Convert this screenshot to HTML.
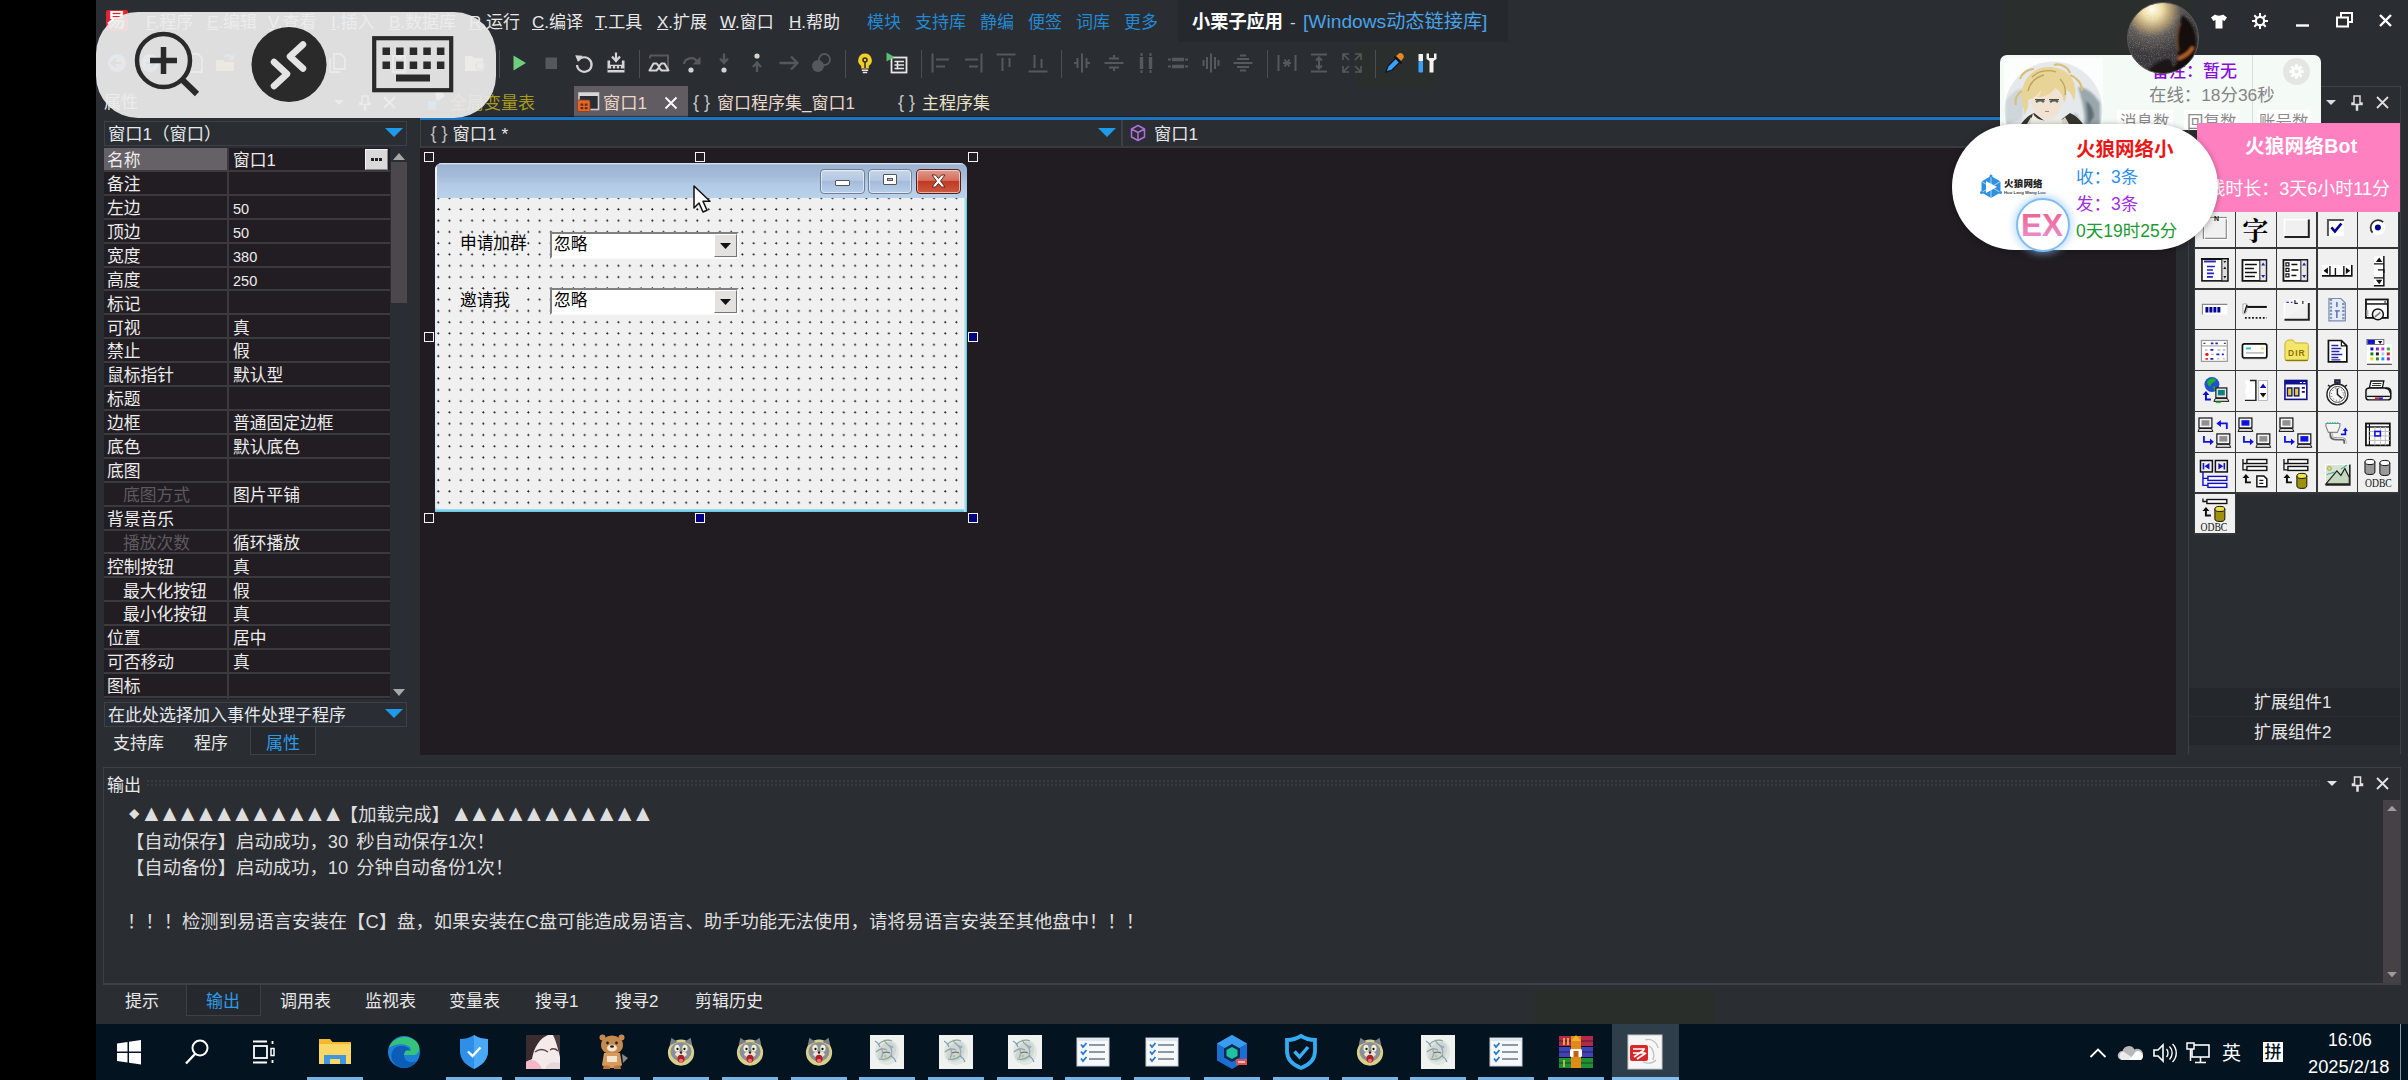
<!DOCTYPE html>
<html lang="zh-CN"><head><meta charset="utf-8"><title>小栗子应用</title>
<style>
*{box-sizing:border-box;margin:0;padding:0}
html,body{width:2408px;height:1080px;overflow:hidden;background:#2a2d32}
body{position:relative;font-family:"Liberation Sans","Noto Sans CJK SC",sans-serif;font-size:17px;color:#e6e6e6;line-height:1}
.a{position:absolute}
.t{position:absolute;white-space:nowrap;line-height:1}
svg{position:absolute;overflow:visible}
.song{font-family:"Liberation Sans","Noto Sans CJK SC",sans-serif}
.m{top:14px;font-size:17px;color:#e8e8e8}
.m.b{color:#2489d3}
.pg{font-size:16.750px;color:#ececec}
.pg.num{font-size:14.500px}
.frm{font-size:16.700px;color:#000}
.out{font-size:18.350px;color:#dedede}
.tri{font-size:23px;letter-spacing:-4.600px;line-height:0}

</style></head><body>
<!-- base surfaces -->
<div class="a" style="left:0;top:0;width:96px;height:1080px;background:#000"></div>
<div class="a" id="work" style="left:420px;top:147px;width:1756px;height:608px;background:#211c22"></div>
<div class="a" id="taskbar" style="left:96px;top:1024px;width:2312px;height:56px;background:#031320"></div>
<div class="a" style="left:1356px;top:44px;width:83px;height:46px;background:#2a2e2c"></div>
<!-- menu bar -->
<div class="a" style="left:1178px;top:0;width:330px;height:42px;background:#25282d"></div>
<div class="a" style="left:106px;top:10px;width:22px;height:21px;background:#e0262c;border-radius:2px"></div>
<div class="t" style="left:107px;top:11px;font-size:19px;font-weight:700;color:#fff">易</div>
<div class="t m" style="left:146px"><u>F</u>.程序</div>
<div class="t m" style="left:207px"><u>E</u>.编辑</div>
<div class="t m" style="left:268px"><u>V</u>.查看</div>
<div class="t m" style="left:331px"><u>I</u>.插入</div>
<div class="t m" style="left:389px"><u>B</u>.数据库</div>
<div class="t m" style="left:469px"><u>R</u>.运行</div>
<div class="t m" style="left:532px"><u>C</u>.编译</div>
<div class="t m" style="left:595px"><u>T</u>.工具</div>
<div class="t m" style="left:657px"><u>X</u>.扩展</div>
<div class="t m" style="left:720px"><u>W</u>.窗口</div>
<div class="t m" style="left:789px"><u>H</u>.帮助</div>
<div class="t m b" style="left:867px">模块</div>
<div class="t m b" style="left:915px">支持库</div>
<div class="t m b" style="left:980px">静编</div>
<div class="t m b" style="left:1028px">便签</div>
<div class="t m b" style="left:1076px">词库</div>
<div class="t m b" style="left:1124px">更多</div>
<div class="t m" style="left:1192px;color:#fff;font-weight:700;font-size:18.200px;top:13px">小栗子应用</div>
<div class="t m" style="left:1290px;color:#cfd6dc">-</div>
<div class="t m" style="left:1303px;color:#4aa3e6;font-size:19.200px;top:12px">[Windows动态链接库]</div>
<!-- toolbar -->
<svg style="left:105px;top:51px" width="24" height="24" viewBox="0 0 24 24"><circle cx="12" cy="12" r="9" fill="#7fb2e0"/><path d="M16 12H8M11 8l-4 4 4 4" stroke="#2a2d33" stroke-width="2" fill="none"/></svg>
<svg style="left:138px;top:51px" width="24" height="24" viewBox="0 0 24 24"><circle cx="12" cy="12" r="9" fill="#7fb2e0"/><path d="M8 12h8M13 8l4 4-4 4" stroke="#2a2d33" stroke-width="2" fill="none"/></svg>
<svg style="left:184px;top:51px" width="24" height="24" viewBox="0 0 24 24"><path d="M6 3h8l4 4v14H6z" fill="none" stroke="#d0d0d0" stroke-width="1.8"/></svg>
<svg style="left:214px;top:51px" width="24" height="24" viewBox="0 0 24 24"><path d="M2 20V9h7l2 2h9v9z" fill="#e8c56a"/><path d="M10 6c2-4 6-4 8-1l2-2v6h-6l2-2c-1-2-3-2-4 0z" fill="#5aa0e0"/></svg>
<svg style="left:326px;top:51px" width="24" height="24" viewBox="0 0 24 24"><path d="M8 3h7l4 4v11H8zM4 7v14h10" fill="none" stroke="#d0d0d0" stroke-width="1.8"/></svg>
<svg style="left:388px;top:51px" width="24" height="24" viewBox="0 0 24 24"><path d="M5 5h12v16H5zM9 2h4v5H9z" fill="none" stroke="#d0d0d0" stroke-width="1.8"/></svg>
<svg style="left:463px;top:51px" width="24" height="24" viewBox="0 0 24 24"><path d="M2 20V5h7l2 2h9v13z" fill="#e8d9a8"/><circle cx="17" cy="15" r="4" fill="none" stroke="#5aa0e0" stroke-width="2"/></svg>
<div class="a" style="left:499px;top:50px;width:1px;height:28px;background:#4b4e53"></div>
<svg style="left:507px;top:51px" width="24" height="24" viewBox="0 0 24 24"><path d="M6.5 4.5 19 12 6.5 19.5z" fill="#6fd07c"/></svg>
<svg style="left:539px;top:51px" width="24" height="24" viewBox="0 0 24 24"><rect x="6.5" y="6.5" width="11.5" height="11.5" fill="#55585c"/></svg>
<svg style="left:572px;top:51px" width="24" height="24" viewBox="0 0 24 24"><path d="M6.2 9.5A7.3 7.3 0 1 1 5 14" fill="none" stroke="#d4d4d4" stroke-width="2.2"/><path d="M3.2 4.2 10.6 4.8 6 11z" fill="#d4d4d4"/></svg>
<svg style="left:604px;top:51px" width="24" height="24" viewBox="0 0 24 24"><path d="M12 1.5v6.5M8 5.5l4 4.5 4-4.5" fill="none" stroke="#d4d4d4" stroke-width="2.2"/><path d="M3.5 9.5v12h17v-12h-2.6v4.2H6.1V9.5z" fill="#d4d4d4"/><path d="M8 15v2.5M12 15v2.5M16 15v2.5M3.5 18.3h17" stroke="#2a2d33" stroke-width="1.6"/></svg>
<div class="a" style="left:639px;top:50px;width:1px;height:28px;background:#4b4e53"></div>
<svg style="left:647px;top:51px" width="24" height="24" viewBox="0 0 24 24"><path d="M3 4.5h18v15M3 4.500v3" fill="none" stroke="#55585c" stroke-width="2"/><path d="M2.5 19.5l4-7h3.2l2.3 3.2 2.300-3.2h3.200l4 7h-7l-2.500-3-2.500 3z" fill="none" stroke="#d4d4d4" stroke-width="2" stroke-linejoin="round"/></svg>
<svg style="left:680px;top:51px" width="24" height="24" viewBox="0 0 24 24"><path d="M4 13c1-6 9-8 13-3" fill="none" stroke="#55585c" stroke-width="2.4"/><path d="M20.500 5.500v8h-8z" fill="#55585c"/><circle cx="11" cy="19" r="2.600" fill="#d4d4d4"/></svg>
<svg style="left:712px;top:51px" width="24" height="24" viewBox="0 0 24 24"><path d="M12 2.500v8M8 7.500l4 4.500 4-4.500" fill="none" stroke="#55585c" stroke-width="2.300"/><circle cx="12" cy="19" r="2.600" fill="#d4d4d4"/></svg>
<svg style="left:745px;top:51px" width="24" height="24" viewBox="0 0 24 24"><circle cx="12" cy="5" r="2.600" fill="#d4d4d4"/><path d="M12 21v-8M8 16l4-4.500 4 4.500" fill="none" stroke="#55585c" stroke-width="2.300"/></svg>
<svg style="left:777px;top:51px" width="24" height="24" viewBox="0 0 24 24"><path d="M2.500 12h18M14 5.500l6.500 6.500-6.500 6.500" fill="none" stroke="#55585c" stroke-width="2.300"/></svg>
<svg style="left:809px;top:51px" width="24" height="24" viewBox="0 0 24 24"><circle cx="15.500" cy="8.500" r="5.500" fill="none" stroke="#55585c" stroke-width="1.800"/><circle cx="9" cy="15" r="6" fill="#55585c"/></svg>
<div class="a" style="left:845px;top:50px;width:1px;height:28px;background:#4b4e53"></div>
<svg style="left:853px;top:51px" width="24" height="24" viewBox="0 0 24 24"><path d="M12 2.500a6.800 6.800 0 0 0-3.800 12.400v2.600h7.600v-2.600A6.800 6.800 0 0 0 12 2.500z" fill="#f3cf2a"/><circle cx="12" cy="9" r="2" fill="none" stroke="#2a2d33" stroke-width="1.500"/><path d="M12 11v6" stroke="#2a2d33" stroke-width="1.500"/><path d="M8.800 19.300h6.400M9.800 21.500h4.400" stroke="#e8e8e8" stroke-width="1.600"/></svg>
<svg style="left:885px;top:51px" width="24" height="24" viewBox="0 0 24 24"><rect x="6.500" y="6.500" width="15" height="15" fill="none" stroke="#e6e6e6" stroke-width="1.800"/><path d="M9.500 10.500h9.500M9.500 14h9.500M9.500 17.500h9.500M12.500 10v8.500" stroke="#e6e6e6" stroke-width="1.600"/><path d="M1.500 1.500 9.500 6 1.500 10.500z" fill="#58c070"/></svg>
<div class="a" style="left:921px;top:50px;width:1px;height:28px;background:#4b4e53"></div>
<svg style="left:929px;top:51px" width="24" height="24" viewBox="0 0 24 24"><path d="M3.500 2.500v19M7 8.500h13M7 15.500h9" stroke="#55585c" stroke-width="2" fill="none"/></svg>
<svg style="left:961px;top:51px" width="24" height="24" viewBox="0 0 24 24"><path d="M20.500 2.500v19M17 8.500H4M17 15.500H8" stroke="#55585c" stroke-width="2" fill="none"/></svg>
<svg style="left:994px;top:51px" width="24" height="24" viewBox="0 0 24 24"><path d="M2.500 3.500h19M8.500 7v13M15.500 7v9" stroke="#55585c" stroke-width="2" fill="none"/></svg>
<svg style="left:1026px;top:51px" width="24" height="24" viewBox="0 0 24 24"><path d="M2.500 20.500h19M8.500 17V4M15.500 17V8" stroke="#55585c" stroke-width="2" fill="none"/></svg>
<div class="a" style="left:1061px;top:50px;width:1px;height:28px;background:#4b4e53"></div>
<svg style="left:1070px;top:51px" width="24" height="24" viewBox="0 0 24 24"><path d="M12 2.500v19M7.500 7v10M16.500 7v10M4 12h3M17 12h3" stroke="#55585c" stroke-width="2" fill="none"/></svg>
<svg style="left:1102px;top:51px" width="24" height="24" viewBox="0 0 24 24"><path d="M2.500 12h19M7 7.500h10M7 16.500h10M12 4v3M12 17v3" stroke="#55585c" stroke-width="2" fill="none"/></svg>
<svg style="left:1134px;top:51px" width="24" height="24" viewBox="0 0 24 24"><path d="M7.500 6v12M16.500 6v12" stroke="#55585c" stroke-width="3.500"/><path d="M7.500 2v3M7.500 19v3M16.500 2v3M16.500 19v3" stroke="#55585c" stroke-width="2" fill="none"/></svg>
<svg style="left:1166px;top:51px" width="24" height="24" viewBox="0 0 24 24"><path d="M6 8.500h12M6 15.500h12" stroke="#55585c" stroke-width="3.500"/><path d="M2 8.500h3M19 8.500h3M2 15.500h3M19 15.500h3" stroke="#55585c" stroke-width="2" fill="none"/></svg>
<svg style="left:1199px;top:51px" width="24" height="24" viewBox="0 0 24 24"><path d="M12 2.500v19M8 6v12M16 6v12M4.500 9v6M19.500 9v6" stroke="#55585c" stroke-width="2" fill="none"/></svg>
<svg style="left:1231px;top:51px" width="24" height="24" viewBox="0 0 24 24"><path d="M2.500 12h19M6 8h12M6 16h12M9 4.500h6M9 19.500h6" stroke="#55585c" stroke-width="2" fill="none"/></svg>
<div class="a" style="left:1267px;top:50px;width:1px;height:28px;background:#4b4e53"></div>
<svg style="left:1275px;top:51px" width="24" height="24" viewBox="0 0 24 24"><path d="M3.500 4v16M20.500 4v16M8 12h8M9.500 8.500l5 7M14.500 8.500l-5 7" stroke="#55585c" stroke-width="2" fill="none"/></svg>
<svg style="left:1307px;top:51px" width="24" height="24" viewBox="0 0 24 24"><path d="M4 3.500h16M4 20.500h16M12 7v10M9 9.500l3-3 3 3M9 14.500l3 3 3-3" stroke="#55585c" stroke-width="2" fill="none"/></svg>
<svg style="left:1340px;top:51px" width="24" height="24" viewBox="0 0 24 24"><path d="M3 9V3h6M15 3h6v6M21 15v6h-6M9 21H3v-6M3.500 3.500l5.500 5.500M20.500 3.500 15 9M20.500 20.500 15 15M3.500 20.500 9 15" stroke="#55585c" stroke-width="1.600" fill="none"/></svg>
<div class="a" style="left:1375px;top:50px;width:1px;height:28px;background:#4b4e53"></div>
<svg style="left:1383px;top:51px" width="24" height="24" viewBox="0 0 24 24"><path d="M3 21l2-6 8-8 4 4-8 8z" fill="#3aa0ff"/><path d="M3 21l2-6 8-8 4 4-8 8z" fill="none" stroke="#10151c" stroke-width="1.200"/><path d="M13 5l3-2.500c2-1.500 6 1.500 4.500 4.500L18 10z" fill="#e08a20"/><path d="M11.500 5.500l7 7" stroke="#10151c" stroke-width="2.200"/></svg>
<svg style="left:1415px;top:51px" width="24" height="24" viewBox="0 0 24 24"><rect x="3.500" y="3" width="4.500" height="7" fill="#f2f2f2"/><rect x="3.500" y="10" width="4.500" height="11.500" rx="1" fill="#3aa0ff"/><path d="M11.500 2.500v5.500l3 2v11.500h4V10l3-2V2.500h-2.500V7h-5V2.500z" fill="#f2f2f2"/></svg>
<!-- left panel header -->
<div class="t" style="left:104px;top:94px;font-size:17px;color:#e8e8e8">属性</div>
<div class="a" style="left:146px;top:98px;width:180px;height:9px;background-image:radial-gradient(#373a3f 0.8px,transparent 1px);background-size:4px 4px"></div>
<svg style="left:332px;top:94px" width="70" height="18" viewBox="0 0 70 18"><path d="M2 6h10l-5 5z" fill="#ddd"/><path d="M30 2h6v7h2v1.500h-4.500V16h-1v-5.500H28V9h2z" fill="none" stroke="#ddd" stroke-width="1.500"/><path d="M52 3l11 11M63 3 52 14" stroke="#ddd" stroke-width="1.800"/></svg>
<!-- document tabs -->
<svg style="left:426px;top:90px" width="22" height="22" viewBox="0 0 22 22"><path d="M9 3c4-3 10-1 9 4l-7 4z" fill="#e8e8e8"/><rect x="2" y="11" width="8" height="9" fill="#4a90d0"/></svg>
<div class="t" style="left:450px;top:94.500px;font-size:17px;color:#a89a1c">全局变量表</div>
<div class="a" style="left:574px;top:86px;width:114px;height:31px;background:#615b62"></div>
<svg style="left:577px;top:91px" width="24" height="22" viewBox="0 0 24 22"><rect x="2" y="2" width="19.500" height="16.500" fill="#2a2d33" stroke="#cfcfcf" stroke-width="1.600"/><path d="M2 3.500h19.500" stroke="#d8d8d8" stroke-width="3"/><rect x="0.500" y="9" width="12.500" height="11.500" rx="1.500" fill="#e0692e" stroke="#8a3a14" stroke-width=".800"/><path d="M3.500 12.500h2.800v2.200H3.500zM7.700 12.500h2.800v2.200H7.700zM3.500 16h2.800v2.200H3.500zM7.700 16h2.800v2.200H7.700z" fill="#6a2a10"/></svg>
<div class="t" style="left:603px;top:94.500px;font-size:17.300px;color:#ead9cc">窗口1</div>
<svg style="left:664px;top:96px" width="14" height="14" viewBox="0 0 14 14"><path d="M1.500 1.500l11 11M12.500 1.500l-11 11" stroke="#fff" stroke-width="1.800"/></svg>
<div class="t" style="left:693px;top:92.500px;font-size:18px;color:#c4c4c4">{ }</div>
<div class="t" style="left:717px;top:94.500px;font-size:17px;color:#ead9cc">窗口程序集_窗口1</div>
<div class="t" style="left:898px;top:92.500px;font-size:18px;color:#c4c4c4">{ }</div>
<div class="t" style="left:922px;top:94.500px;font-size:17px;color:#e8e2c8">主程序集</div>
<div class="a" style="left:420px;top:117px;width:1756px;height:3.500px;background:#1b75be;box-shadow:0 -1px 1px rgba(20,24,30,.6)"></div>
<!-- sub header -->
<div class="a" style="left:104px;top:121px;width:303px;height:25px;border:1px solid #3d4046;background:#2a2d32"></div>
<div class="t" style="left:108px;top:126.300px;font-size:17.300px;color:#e4e9ee">窗口1（窗口）</div>
<svg style="left:385px;top:128px" width="18" height="10" viewBox="0 0 18 10"><path d="M0 0h18l-9 9z" fill="#1e9be8"/></svg>
<div class="a" style="left:420px;top:120px;width:1756px;height:28px;border:1px solid #3d4046;border-top:none;border-bottom:2px solid #3a3a40;background:#2a2d32"></div>
<div class="a" style="left:1121px;top:120px;width:2px;height:26px;background:#3d4046"></div>
<div class="t" style="left:430.500px;top:124px;font-size:18px;color:#bdbdbd">{ }</div>
<div class="t" style="left:452.500px;top:126px;font-size:17.300px;color:#e8e8e8">窗口1 *</div>
<svg style="left:1098px;top:128px" width="18" height="10" viewBox="0 0 18 10"><path d="M0 0h18l-9 9z" fill="#1e9be8"/></svg>
<svg style="left:1129px;top:124px" width="18" height="18" viewBox="0 0 18 18"><path d="M9 1.500 15.500 5v8L9 16.500 2.500 13V5zM2.500 5 9 8.500 15.500 5M9 8.500v8" fill="none" stroke="#b06fd8" stroke-width="1.500" stroke-linejoin="round"/></svg>
<div class="t" style="left:1154px;top:126.300px;font-size:17.300px;color:#e8e8e8">窗口1</div>
<!-- property grid -->
<div class="a" style="left:104px;top:148px;width:286px;height:551px;background:#221d23;overflow:hidden">
<div class="a" style="left:0;top:0.00px;width:125px;height:23.91px;background:#656166;border-bottom:2px solid #3b3a3f;border-right:2px solid #3b3a3f"></div><div class="a" style="left:125px;top:0.00px;width:161px;height:23.91px;border-bottom:2px solid #3b3a3f"></div><div class="t pg" style="left:3px;top:5.20px;color:#ececec">名称</div><div class="t pg" style="left:129px;top:5.20px">窗口1</div>
<div class="a" style="left:0;top:23.91px;width:125px;height:23.91px;border-bottom:2px solid #3b3a3f;border-right:2px solid #3b3a3f"></div><div class="a" style="left:125px;top:23.91px;width:161px;height:23.91px;border-bottom:2px solid #3b3a3f"></div><div class="t pg" style="left:3px;top:29.11px;color:#ececec">备注</div>
<div class="a" style="left:0;top:47.82px;width:125px;height:23.91px;border-bottom:2px solid #3b3a3f;border-right:2px solid #3b3a3f"></div><div class="a" style="left:125px;top:47.82px;width:161px;height:23.91px;border-bottom:2px solid #3b3a3f"></div><div class="t pg" style="left:3px;top:53.02px;color:#ececec">左边</div><div class="t pg num" style="left:129px;top:54.22px">50</div>
<div class="a" style="left:0;top:71.73px;width:125px;height:23.91px;border-bottom:2px solid #3b3a3f;border-right:2px solid #3b3a3f"></div><div class="a" style="left:125px;top:71.73px;width:161px;height:23.91px;border-bottom:2px solid #3b3a3f"></div><div class="t pg" style="left:3px;top:76.93px;color:#ececec">顶边</div><div class="t pg num" style="left:129px;top:78.13px">50</div>
<div class="a" style="left:0;top:95.64px;width:125px;height:23.91px;border-bottom:2px solid #3b3a3f;border-right:2px solid #3b3a3f"></div><div class="a" style="left:125px;top:95.64px;width:161px;height:23.91px;border-bottom:2px solid #3b3a3f"></div><div class="t pg" style="left:3px;top:100.84px;color:#ececec">宽度</div><div class="t pg num" style="left:129px;top:102.04px">380</div>
<div class="a" style="left:0;top:119.54px;width:125px;height:23.91px;border-bottom:2px solid #3b3a3f;border-right:2px solid #3b3a3f"></div><div class="a" style="left:125px;top:119.54px;width:161px;height:23.91px;border-bottom:2px solid #3b3a3f"></div><div class="t pg" style="left:3px;top:124.74px;color:#ececec">高度</div><div class="t pg num" style="left:129px;top:125.94px">250</div>
<div class="a" style="left:0;top:143.45px;width:125px;height:23.91px;border-bottom:2px solid #3b3a3f;border-right:2px solid #3b3a3f"></div><div class="a" style="left:125px;top:143.45px;width:161px;height:23.91px;border-bottom:2px solid #3b3a3f"></div><div class="t pg" style="left:3px;top:148.65px;color:#ececec">标记</div>
<div class="a" style="left:0;top:167.36px;width:125px;height:23.91px;border-bottom:2px solid #3b3a3f;border-right:2px solid #3b3a3f"></div><div class="a" style="left:125px;top:167.36px;width:161px;height:23.91px;border-bottom:2px solid #3b3a3f"></div><div class="t pg" style="left:3px;top:172.56px;color:#ececec">可视</div><div class="t pg" style="left:129px;top:172.56px">真</div>
<div class="a" style="left:0;top:191.27px;width:125px;height:23.91px;border-bottom:2px solid #3b3a3f;border-right:2px solid #3b3a3f"></div><div class="a" style="left:125px;top:191.27px;width:161px;height:23.91px;border-bottom:2px solid #3b3a3f"></div><div class="t pg" style="left:3px;top:196.47px;color:#ececec">禁止</div><div class="t pg" style="left:129px;top:196.47px">假</div>
<div class="a" style="left:0;top:215.18px;width:125px;height:23.91px;border-bottom:2px solid #3b3a3f;border-right:2px solid #3b3a3f"></div><div class="a" style="left:125px;top:215.18px;width:161px;height:23.91px;border-bottom:2px solid #3b3a3f"></div><div class="t pg" style="left:3px;top:220.38px;color:#ececec">鼠标指针</div><div class="t pg" style="left:129px;top:220.38px">默认型</div>
<div class="a" style="left:0;top:239.09px;width:125px;height:23.91px;border-bottom:2px solid #3b3a3f;border-right:2px solid #3b3a3f"></div><div class="a" style="left:125px;top:239.09px;width:161px;height:23.91px;border-bottom:2px solid #3b3a3f"></div><div class="t pg" style="left:3px;top:244.29px;color:#ececec">标题</div>
<div class="a" style="left:0;top:263.00px;width:125px;height:23.91px;border-bottom:2px solid #3b3a3f;border-right:2px solid #3b3a3f"></div><div class="a" style="left:125px;top:263.00px;width:161px;height:23.91px;border-bottom:2px solid #3b3a3f"></div><div class="t pg" style="left:3px;top:268.20px;color:#ececec">边框</div><div class="t pg" style="left:129px;top:268.20px">普通固定边框</div>
<div class="a" style="left:0;top:286.91px;width:125px;height:23.91px;border-bottom:2px solid #3b3a3f;border-right:2px solid #3b3a3f"></div><div class="a" style="left:125px;top:286.91px;width:161px;height:23.91px;border-bottom:2px solid #3b3a3f"></div><div class="t pg" style="left:3px;top:292.11px;color:#ececec">底色</div><div class="t pg" style="left:129px;top:292.11px">默认底色</div>
<div class="a" style="left:0;top:310.82px;width:125px;height:23.91px;border-bottom:2px solid #3b3a3f;border-right:2px solid #3b3a3f"></div><div class="a" style="left:125px;top:310.82px;width:161px;height:23.91px;border-bottom:2px solid #3b3a3f"></div><div class="t pg" style="left:3px;top:316.02px;color:#ececec">底图</div>
<div class="a" style="left:0;top:334.73px;width:125px;height:23.91px;border-bottom:2px solid #3b3a3f;border-right:2px solid #3b3a3f"></div><div class="a" style="left:125px;top:334.73px;width:161px;height:23.91px;border-bottom:2px solid #3b3a3f"></div><div class="t pg" style="left:19px;top:339.93px;color:#5c5a5f">底图方式</div><div class="t pg" style="left:129px;top:339.93px">图片平铺</div>
<div class="a" style="left:0;top:358.63px;width:125px;height:23.91px;border-bottom:2px solid #3b3a3f;border-right:2px solid #3b3a3f"></div><div class="a" style="left:125px;top:358.63px;width:161px;height:23.91px;border-bottom:2px solid #3b3a3f"></div><div class="t pg" style="left:3px;top:363.83px;color:#ececec">背景音乐</div>
<div class="a" style="left:0;top:382.54px;width:125px;height:23.91px;border-bottom:2px solid #3b3a3f;border-right:2px solid #3b3a3f"></div><div class="a" style="left:125px;top:382.54px;width:161px;height:23.91px;border-bottom:2px solid #3b3a3f"></div><div class="t pg" style="left:19px;top:387.74px;color:#5c5a5f">播放次数</div><div class="t pg" style="left:129px;top:387.74px">循环播放</div>
<div class="a" style="left:0;top:406.45px;width:125px;height:23.91px;border-bottom:2px solid #3b3a3f;border-right:2px solid #3b3a3f"></div><div class="a" style="left:125px;top:406.45px;width:161px;height:23.91px;border-bottom:2px solid #3b3a3f"></div><div class="t pg" style="left:3px;top:411.65px;color:#ececec">控制按钮</div><div class="t pg" style="left:129px;top:411.65px">真</div>
<div class="a" style="left:0;top:430.36px;width:125px;height:23.91px;border-bottom:2px solid #3b3a3f;border-right:2px solid #3b3a3f"></div><div class="a" style="left:125px;top:430.36px;width:161px;height:23.91px;border-bottom:2px solid #3b3a3f"></div><div class="t pg" style="left:19px;top:435.56px;color:#ececec">最大化按钮</div><div class="t pg" style="left:129px;top:435.56px">假</div>
<div class="a" style="left:0;top:454.27px;width:125px;height:23.91px;border-bottom:2px solid #3b3a3f;border-right:2px solid #3b3a3f"></div><div class="a" style="left:125px;top:454.27px;width:161px;height:23.91px;border-bottom:2px solid #3b3a3f"></div><div class="t pg" style="left:19px;top:459.47px;color:#ececec">最小化按钮</div><div class="t pg" style="left:129px;top:459.47px">真</div>
<div class="a" style="left:0;top:478.18px;width:125px;height:23.91px;border-bottom:2px solid #3b3a3f;border-right:2px solid #3b3a3f"></div><div class="a" style="left:125px;top:478.18px;width:161px;height:23.91px;border-bottom:2px solid #3b3a3f"></div><div class="t pg" style="left:3px;top:483.38px;color:#ececec">位置</div><div class="t pg" style="left:129px;top:483.38px">居中</div>
<div class="a" style="left:0;top:502.09px;width:125px;height:23.91px;border-bottom:2px solid #3b3a3f;border-right:2px solid #3b3a3f"></div><div class="a" style="left:125px;top:502.09px;width:161px;height:23.91px;border-bottom:2px solid #3b3a3f"></div><div class="t pg" style="left:3px;top:507.29px;color:#ececec">可否移动</div><div class="t pg" style="left:129px;top:507.29px">真</div>
<div class="a" style="left:0;top:526.00px;width:125px;height:23.91px;border-bottom:2px solid #3b3a3f;border-right:2px solid #3b3a3f"></div><div class="a" style="left:125px;top:526.00px;width:161px;height:23.91px;border-bottom:2px solid #3b3a3f"></div><div class="t pg" style="left:3px;top:531.20px;color:#ececec">图标</div>
<div class="a" style="left:0;top:549.9px;width:125px;height:4px;border-right:2px solid #3b3a3f"></div>
<div class="a" style="left:261px;top:1px;width:23px;height:21px;background:#d9d9d9;border:1px solid #f4f4f4;border-right-color:#888;border-bottom-color:#888"></div><div class="a" style="left:267px;top:10px;width:3px;height:3px;background:#222;box-shadow:4px 0 #222,8px 0 #222"></div>
</div>
<div class="a" style="left:391px;top:147px;width:16px;height:552px;background:#2a2d33"></div><div class="a" style="left:391px;top:162px;width:16px;height:141px;background:#4b474d"></div><svg style="left:393px;top:152px" width="12" height="8" viewBox="0 0 12 8"><path d="M0 8 6 1l6 7z" fill="#a8a8a8"/></svg><svg style="left:393px;top:689px" width="12" height="8" viewBox="0 0 12 8"><path d="M0 0h12L6 7z" fill="#a8a8a8"/></svg>
<div class="a" style="left:104px;top:702px;width:303px;height:25px;border:1px solid #3d4046;background:#2a2d33"></div><div class="t" style="left:108px;top:707px;font-size:17px;color:#e4e9ee">在此处选择加入事件处理子程序</div><svg style="left:385px;top:709px" width="18" height="10" viewBox="0 0 18 10"><path d="M0 0h18l-9 9z" fill="#1e9be8"/></svg>
<div class="a" style="left:250px;top:727px;width:66px;height:28px;background:#25282d;border:1px solid #3d4046;border-top:none"></div><div class="t" style="left:113px;top:735px;font-size:17px;color:#e8e8e8">支持库</div><div class="t" style="left:194px;top:735px;font-size:17px;color:#e8e8e8">程序</div><div class="t" style="left:266px;top:735px;font-size:17px;color:#2e9be8">属性</div>
<!-- design form -->
<div class="a" style="left:424px;top:152px;width:10px;height:10px;border:1.500px solid #f4f4f4;background:#211c22"></div><div class="a" style="left:695px;top:152px;width:10px;height:10px;border:1.500px solid #f4f4f4;background:#211c22"></div><div class="a" style="left:968px;top:152px;width:10px;height:10px;border:1.500px solid #f4f4f4;background:#211c22"></div><div class="a" style="left:424px;top:332px;width:10px;height:10px;border:1.500px solid #f4f4f4;background:#211c22"></div><div class="a" style="left:968px;top:332px;width:10px;height:10px;border:1.500px solid #f4f4f4;background:#00007e"></div><div class="a" style="left:424px;top:513px;width:10px;height:10px;border:1.500px solid #f4f4f4;background:#211c22"></div><div class="a" style="left:695px;top:513px;width:10px;height:10px;border:1.500px solid #f4f4f4;background:#00007e"></div><div class="a" style="left:968px;top:513px;width:10px;height:10px;border:1.500px solid #f4f4f4;background:#00007e"></div>
<div class="a" style="left:435px;top:163px;width:532px;height:349px;border-radius:7px 7px 0 0;background:linear-gradient(90deg,#d8ecf6 0,#d8ecf6 50%,#5ec6e0 100%);overflow:hidden"><div class="a" style="left:0;top:0;width:532px;height:35px;background:linear-gradient(#e8f0fa 0,#9cb4d2 2px,#a3bbd8 12px,#b3cae6 22px,#b9d2ea 35px)"></div><div class="a" style="left:0;top:0;width:2px;height:349px;background:linear-gradient(#eef4fb,#d8ecf6)"></div><div class="a" style="left:0;top:344px;width:532px;height:5px;background:linear-gradient(#d4eef8,#5ec6e0)"></div><div class="a" style="left:529px;top:35px;width:3px;height:314px;background:linear-gradient(90deg,#d4eef8,#5ec6e0)"></div><div class="a" style="left:2px;top:35px;width:527px;height:311px;background-color:#f0f0f0;background-image:radial-gradient(circle at 1.300px 1.300px,#1c1c1c 0.700px,rgba(28,28,28,0) 1.300px);background-size:11.280px 11.290px;background-position:0 -1.200px"></div><div class="a" style="left:385px;top:6px;width:45px;height:25px;border:1px solid #6e7f96;border-radius:4px;background:linear-gradient(#c6d6ea 0,#b4c8e2 45%,#a4bcdc 50%,#b8cee8 100%);box-shadow:inset 0 0 0 1px rgba(255,255,255,.55)"></div><div class="a" style="left:433px;top:6px;width:44px;height:25px;border:1px solid #6e7f96;border-radius:4px;background:linear-gradient(#c6d6ea 0,#b4c8e2 45%,#a4bcdc 50%,#b8cee8 100%);box-shadow:inset 0 0 0 1px rgba(255,255,255,.55)"></div><div class="a" style="left:481px;top:6px;width:45px;height:25px;border:1px solid #5a2018;border-radius:4px;background:linear-gradient(#e0988a 0,#d4705c 45%,#c23a24 50%,#cc5a40 100%);box-shadow:inset 0 0 0 1px rgba(255,255,255,.55)"></div><div class="a" style="left:400px;top:17px;width:15px;height:6px;border:1px solid #555;border-radius:1px;background:#fff"></div><div class="a" style="left:448px;top:11px;width:14px;height:11px;border:1px solid #555;background:#fff;border-radius:1px"></div><div class="a" style="left:452px;top:15px;width:6px;height:3px;border:1px solid #555;background:#b4c8e2"></div><svg style="left:495px;top:11px" width="17" height="14" viewBox="0 0 17 14"><path d="M2 1h3.500l3 3.500 3-3.500H15l-4.500 6 4.500 6h-3.500l-3-3.500-3 3.500H2l4.500-6z" fill="#fff" stroke="#5a2a22" stroke-width="1"/></svg></div>
<div class="a" style="left:456px;top:236px;width:68px;height:16px;background:#f0f0f0"></div><div class="t frm" style="left:460px;top:236px">申请加群</div><div class="a" style="left:550px;top:232px;width:189px;height:27px;background:#fff;border:2px solid;border-color:#808080 #fbfbfb #fbfbfb #808080"></div><div class="a" style="left:714px;top:234px;width:23px;height:23px;background:#e4e2de;border:1.500px solid;border-color:#fff #777 #777 #fff"></div><svg style="left:720px;top:243.0px" width="11" height="6" viewBox="0 0 11 6"><path d="M0 0h11L5.500 6z" fill="#111"/></svg><div class="t frm" style="left:554px;top:237px">忽略</div><div class="a" style="left:456px;top:293px;width:68px;height:16px;background:#f0f0f0"></div><div class="t frm" style="left:460px;top:293px">邀请我</div><div class="a" style="left:550px;top:288px;width:189px;height:27px;background:#fff;border:2px solid;border-color:#808080 #fbfbfb #fbfbfb #808080"></div><div class="a" style="left:714px;top:290px;width:23px;height:23px;background:#e4e2de;border:1.500px solid;border-color:#fff #777 #777 #fff"></div><svg style="left:720px;top:299.0px" width="11" height="6" viewBox="0 0 11 6"><path d="M0 0h11L5.500 6z" fill="#111"/></svg><div class="t frm" style="left:554px;top:293px">忽略</div>
<svg style="left:692px;top:184px" width="22" height="32" viewBox="0 0 22 32"><path d="M2 2v22l5-5 4 9 4-1.800-4-9h7z" fill="#fff" stroke="#111" stroke-width="1.500" stroke-linejoin="round"/></svg>
<!-- component toolbox -->
<div class="a" style="left:2188px;top:86px;width:213px;height:668px;border:1px solid #3d4046;border-bottom:none"></div>
<div class="a" style="left:2194.0px;top:206.5px;width:205.3px;height:287.3px;background:#353638"></div><div class="a" style="left:2194.0px;top:493.1px;width:42.2px;height:41.6px;background:#353638"></div>
<div class="a" style="left:2195.40px;top:207.90px;width:39.37px;height:39.45px;background:#f0f0f0"></div><svg style="left:2194.70px;top:210.70px" width="40.77" height="40.85" viewBox="0 0 41 41"><rect x="8.500" y="6.500" width="23" height="21" fill="none" stroke="#8a8a8a" stroke-width="1.200"/><rect x="9.700" y="7.700" width="23" height="21" fill="none" stroke="#fff" stroke-width="1"/><text x="19" y="10" font-size="7" font-weight="700" fill="#111">N</text></svg>
<div class="a" style="left:2236.17px;top:207.90px;width:39.37px;height:39.45px;background:#f0f0f0"></div><svg style="left:2235.47px;top:210.70px" width="40.77" height="40.85" viewBox="0 0 41 41"><text x="20.500" y="29" font-size="26" font-weight="700" text-anchor="middle" fill="#000" font-family="Noto Serif CJK SC,serif">字</text></svg>
<div class="a" style="left:2276.94px;top:207.90px;width:39.37px;height:39.45px;background:#f0f0f0"></div><svg style="left:2276.24px;top:210.70px" width="40.77" height="40.85" viewBox="0 0 41 41"><path d="M8.500 26V8.500H33" fill="none" stroke="#fff" stroke-width="1.600"/><path d="M8.500 26H33V8.500" fill="none" stroke="#222" stroke-width="2"/></svg>
<div class="a" style="left:2317.71px;top:207.90px;width:39.37px;height:39.45px;background:#f0f0f0"></div><svg style="left:2317.01px;top:210.70px" width="40.77" height="40.85" viewBox="0 0 41 41"><rect x="11" y="9" width="16" height="16" fill="#fff"/><path d="M11 25V9h16" fill="none" stroke="#555" stroke-width="2"/><path d="M14.500 16.500l3.500 4 6.500-8" fill="none" stroke="#000090" stroke-width="2.600"/></svg>
<div class="a" style="left:2358.48px;top:207.90px;width:39.37px;height:39.45px;background:#f0f0f0"></div><svg style="left:2357.78px;top:210.70px" width="40.77" height="40.85" viewBox="0 0 41 41"><circle cx="20" cy="16.500" r="7.500" fill="#fff"/><path d="M14.700 21.800A7.500 7.500 0 0 1 25.300 11.200" fill="none" stroke="#333" stroke-width="1.800"/><circle cx="20" cy="16.500" r="3" fill="#000090"/></svg>
<div class="a" style="left:2195.40px;top:248.75px;width:39.37px;height:39.45px;background:#f0f0f0"></div><svg style="left:2194.70px;top:249.55px" width="40.77" height="40.85" viewBox="0 0 41 41"><rect x="7" y="9" width="26" height="22" fill="#fff" stroke="#111" stroke-width="1.600"/><path d="M6 9h28" stroke="#111" stroke-width="2"/><path d="M9 11.500h12" stroke="#3030b0" stroke-width="2"/><path d="M12 16.500h8M12 20h6M12 23.500h7M12 27h6" stroke="#2020c0" stroke-width="1.600"/><rect x="27" y="9" width="6" height="22" fill="#ddd" stroke="#111" stroke-width="1"/><path d="M28.500 11h3l-1.500 2zM28.500 19h3l-1.500-2.500zM28.500 26h3l-1.500 2.500z" fill="#111"/></svg>
<div class="a" style="left:2236.17px;top:248.75px;width:39.37px;height:39.45px;background:#f0f0f0"></div><svg style="left:2235.47px;top:249.55px" width="40.77" height="40.85" viewBox="0 0 41 41"><rect x="7.500" y="10" width="24" height="21" fill="#fff" stroke="#111" stroke-width="1.800"/><path d="M10 14.500h12M10 18.500h9M10 22.500h12M10 26.500h10" stroke="#111" stroke-width="1.500"/><rect x="25" y="10" width="6.500" height="21" fill="#e8e8e8" stroke="#111" stroke-width="1"/><path d="M26.300 15.500h4l-2-3zM26.300 25h4l-2 3z" fill="#2020c0"/></svg>
<div class="a" style="left:2276.94px;top:248.75px;width:39.37px;height:39.45px;background:#f0f0f0"></div><svg style="left:2276.24px;top:249.55px" width="40.77" height="40.85" viewBox="0 0 41 41"><rect x="7.500" y="10" width="24" height="21" fill="#fff" stroke="#111" stroke-width="1.800"/><path d="M10 13h3v3h-3zM10 18.500h3v3h-3zM10 24h3v3h-3z" fill="none" stroke="#111" stroke-width="1.200"/><path d="M15.500 14.500h6M15.500 20h7M15.500 25.500h5" stroke="#111" stroke-width="1.500"/><rect x="25" y="10" width="6.500" height="21" fill="#e8e8e8" stroke="#111" stroke-width="1"/><path d="M26.300 15.500h4l-2-3zM26.300 25h4l-2 3z" fill="#2020c0"/></svg>
<div class="a" style="left:2317.71px;top:248.75px;width:39.37px;height:39.45px;background:#f0f0f0"></div><svg style="left:2317.01px;top:249.55px" width="40.77" height="40.85" viewBox="0 0 41 41"><rect x="5" y="15" width="30" height="11" fill="#fff"/><path d="M5 26h30V15" fill="none" stroke="#111" stroke-width="1.600"/><path d="M13 16v10M27 16v10M18.500 18v8" stroke="#111" stroke-width="1.400"/><path d="M11 17.500v6.500l-4.500-3.200zM29 17.500v6.500l4.500-3.200z" fill="#111"/></svg>
<div class="a" style="left:2358.48px;top:248.75px;width:39.37px;height:39.45px;background:#f0f0f0"></div><svg style="left:2357.78px;top:249.55px" width="40.77" height="40.85" viewBox="0 0 41 41"><rect x="16" y="6" width="10" height="30" fill="#fff"/><path d="M16 36h10V6" fill="none" stroke="#111" stroke-width="1.500"/><path d="M16 14h10M16 28h10M20 20h6v3" stroke="#111" stroke-width="1.300" fill="none"/><path d="M18 12h6.500l-3.200-4.500zM18 30h6.500l-3.200 4.500z" fill="#111"/></svg>
<div class="a" style="left:2195.40px;top:289.60px;width:39.37px;height:39.45px;background:#f0f0f0"></div><svg style="left:2194.70px;top:290.40px" width="40.77" height="40.85" viewBox="0 0 41 41"><rect x="7.500" y="14.500" width="25" height="10" fill="#fff"/><path d="M7.500 24.500v-10h25" fill="none" stroke="#888" stroke-width="1.200"/><path d="M10.500 17h3v5.500h-3zM14.500 17h3v5.500h-3zM18.500 17h3v5.500h-3zM22.500 17h3v5.500h-3z" fill="#000090"/></svg>
<div class="a" style="left:2236.17px;top:289.60px;width:39.37px;height:39.45px;background:#f0f0f0"></div><svg style="left:2235.47px;top:290.40px" width="40.77" height="40.85" viewBox="0 0 41 41"><path d="M10 17h22" stroke="#111" stroke-width="2"/><path d="M8 14h4v7l-2 3h-2z" fill="#fff" stroke="#999" stroke-width=".800"/><path d="M12 15l-2.500 8" stroke="#111" stroke-width="1.400"/><path d="M10 28h22" stroke="#111" stroke-width="2" stroke-dasharray="1.800 1.800"/></svg>
<div class="a" style="left:2276.94px;top:289.60px;width:39.37px;height:39.45px;background:#f0f0f0"></div><svg style="left:2276.24px;top:290.40px" width="40.77" height="40.85" viewBox="0 0 41 41"><path d="M8.500 29.500V13h5v-3h9v3h10.500" fill="#f4f4f4" stroke="#fff" stroke-width="1.500"/><path d="M8.500 30H33V13" fill="none" stroke="#222" stroke-width="2"/><path d="M10.500 12.500h2.500M15 12.500h1.500" stroke="#3030c0" stroke-width="1.200"/><path d="M19 10v3.500h3M27 11v3" stroke="#222" stroke-width="1.200" fill="none"/></svg>
<div class="a" style="left:2317.71px;top:289.60px;width:39.37px;height:39.45px;background:#f0f0f0"></div><svg style="left:2317.01px;top:290.40px" width="40.77" height="40.85" viewBox="0 0 41 41"><path d="M12 8.500h12l4.500 4.500v18H12z" fill="#e4ecf6" stroke="#7a8cb0" stroke-width="1.200"/><path d="M14 9v22M26.500 13v18" stroke="#7a8cb0" stroke-width="2.400" stroke-dasharray="2 1.600"/><path d="M20 12v5M18 21h5M20 21v7" stroke="#5068a8" stroke-width="1.400"/></svg>
<div class="a" style="left:2358.48px;top:289.60px;width:39.37px;height:39.45px;background:#f0f0f0"></div><svg style="left:2357.78px;top:290.40px" width="40.77" height="40.85" viewBox="0 0 41 41"><rect x="8" y="9.500" width="22" height="18.500" fill="#fff" stroke="#111" stroke-width="1.800"/><path d="M8 14h22" stroke="#111" stroke-width="1.500"/><path d="M26 12.500h2.500l-1.200-1.800z" fill="#111"/><circle cx="20" cy="24.500" r="5.500" fill="#f4f4f4" stroke="#111" stroke-width="1.500"/><path d="M17 27l5.500-4.500" stroke="#777" stroke-width="1.500"/><path d="M9.500 20v6" stroke="#bbb" stroke-width="2"/></svg>
<div class="a" style="left:2195.40px;top:330.45px;width:39.37px;height:39.45px;background:#f0f0f0"></div><svg style="left:2194.70px;top:331.25px" width="40.77" height="40.85" viewBox="0 0 41 41"><rect x="6.500" y="9.500" width="26" height="21" fill="#fff" stroke="#999" stroke-width="1.200"/><path d="M6.500 15h26" stroke="#999" stroke-width="1"/><path d="M8.500 12.500h2M29 12.500h2" stroke="#444" stroke-width="1.200"/><path d="M16 12.500h2.500M20.500 12.500h2.500M15.500 19h3M27 23.500h2M21.500 23.500h3M15.500 28h3" stroke="#2020c0" stroke-width="1.700"/><path d="M10 19h2.500M22.500 19h3M28 19h2.500M16 23.500h3M22 28h2.500M28 28h2" stroke="#bbb" stroke-width="1.400"/><circle cx="12" cy="23.500" r="1.700" fill="#e02020"/><path d="M10.500 28h2.500" stroke="#e02020" stroke-width="1.700"/></svg>
<div class="a" style="left:2236.17px;top:330.45px;width:39.37px;height:39.45px;background:#f0f0f0"></div><svg style="left:2235.47px;top:331.25px" width="40.77" height="40.85" viewBox="0 0 41 41"><rect x="7.500" y="13" width="24.500" height="14" rx="2" fill="#fff" stroke="#111" stroke-width="1.700"/><path d="M8.500 27.500h23" stroke="#555" stroke-width="1.500"/><path d="M11 17.500h5" stroke="#30c0c0" stroke-width="2"/><path d="M26 17.500h3" stroke="#f0e060" stroke-width="2"/><path d="M11 22h18" stroke="#bbb" stroke-width="1.600"/></svg>
<div class="a" style="left:2276.94px;top:330.45px;width:39.37px;height:39.45px;background:#f0f0f0"></div><svg style="left:2276.24px;top:331.25px" width="40.77" height="40.85" viewBox="0 0 41 41"><path d="M9 13.500c0-3 2-4.500 4.500-4.500h3.500l2.500 3H30c2 0 2.500 1 2.500 2.500V27c0 2-1 3-3 3H12c-2 0-3-1-3-3z" fill="#f4e66a" stroke="#c8b020" stroke-width="1"/><path d="M9.500 29.500h22.500" stroke="#8a7a10" stroke-width="1.300"/><text x="21" y="25.500" font-size="8.500" font-weight="700" text-anchor="middle" fill="#8a7000" letter-spacing="1">DIR</text></svg>
<div class="a" style="left:2317.71px;top:330.45px;width:39.37px;height:39.45px;background:#f0f0f0"></div><svg style="left:2317.01px;top:331.25px" width="40.77" height="40.85" viewBox="0 0 41 41"><path d="M11.500 9.500h13l5.500 5.500v16H11.500z" fill="#fff" stroke="#111" stroke-width="1.700"/><path d="M24.500 9.500v5.500H30" fill="none" stroke="#111" stroke-width="1.200"/><path d="M14.500 14.500h7M14.500 17.500h10M14.500 20.500h8M14.500 23.500h11M14.500 26.500h7M14.500 29h9" stroke="#2828a8" stroke-width="1.500"/></svg>
<div class="a" style="left:2358.48px;top:330.45px;width:39.37px;height:39.45px;background:#f0f0f0"></div><svg style="left:2357.78px;top:331.25px" width="40.77" height="40.85" viewBox="0 0 41 41"><rect x="9" y="13" width="25" height="20" fill="#fff"/><path d="M9 33.500h25" stroke="#555" stroke-width="1.300"/><rect x="9" y="8.500" width="17" height="5" fill="#fff" stroke="#555" stroke-width=".800"/><rect x="9.500" y="9" width="7.500" height="4" fill="#1010d0"/><path d="M20 10h4.500l-2.200 3z" fill="#111"/><rect x="12.5" y="16.5" width="3" height="3" fill="#1010c0"/><rect x="18.0" y="16.5" width="3" height="3" fill="#8020c0"/><rect x="23.5" y="16.5" width="3" height="3" fill="#e020e0"/><rect x="29.0" y="16.5" width="3" height="3" fill="#20c020"/><rect x="12.5" y="21.5" width="3" height="3" fill="#108010"/><rect x="18.0" y="21.5" width="3" height="3" fill="#202020"/><rect x="23.5" y="21.5" width="3" height="3" fill="#a0d0f0"/><rect x="29.0" y="21.5" width="3" height="3" fill="#e02020"/><rect x="12.5" y="26.5" width="3" height="3" fill="#e0e000"/><rect x="18.0" y="26.5" width="3" height="3" fill="#209020"/><rect x="23.5" y="26.5" width="3" height="3" fill="#2090f0"/><rect x="29.0" y="26.5" width="3" height="3" fill="#9020d0"/></svg>
<div class="a" style="left:2195.40px;top:371.30px;width:39.37px;height:39.45px;background:#f0f0f0"></div><svg style="left:2194.70px;top:372.10px" width="40.77" height="40.85" viewBox="0 0 41 41"><circle cx="17" cy="12.500" r="7.500" fill="#2050d0"/><path d="M12 10c2-4 7-5 9-2-1 3-4 2-5 5s-3 1-4-3zM18 15c2-1 5 0 5 2l-3 2z" fill="#20b030"/><rect x="21" y="16" width="11" height="10" fill="#e8e8e8" stroke="#111" stroke-width="1.200"/><rect x="23" y="18" width="7" height="5.500" fill="#108080"/><path d="M19 29.500h15l-1.500-3h-12z" fill="#ddd" stroke="#111" stroke-width="1"/><path d="M21 30.500h5" stroke="#20c020" stroke-width="1.500"/><path d="M11 19l-3.500 4h2.500v5.500h6v-2h-4V23h2.500z" fill="#1010c0"/></svg>
<div class="a" style="left:2236.17px;top:371.30px;width:39.37px;height:39.45px;background:#f0f0f0"></div><svg style="left:2235.47px;top:372.10px" width="40.77" height="40.85" viewBox="0 0 41 41"><path d="M10 8.500h11v20H10l1.500-5-1.500-4 1.500-5z" fill="#fff"/><path d="M15 8.500h6v20h-11" fill="none" stroke="#222" stroke-width="1.500"/><rect x="23.500" y="8.500" width="9" height="20" fill="#fff" stroke="#aaa" stroke-width=".800"/><path d="M25 16h6.500l-3.200-4.500z" fill="#1010c0"/><path d="M25 21h6.500l-3.200 4.500z" fill="#111"/></svg>
<div class="a" style="left:2276.94px;top:371.30px;width:39.37px;height:39.45px;background:#f0f0f0"></div><svg style="left:2276.24px;top:372.10px" width="40.77" height="40.85" viewBox="0 0 41 41"><rect x="9" y="8.500" width="22" height="19" fill="#fff" stroke="#101080" stroke-width="1.600"/><rect x="9" y="8.500" width="22" height="4" fill="#101090"/><path d="M24 10.500h2M27.500 10.500h2" stroke="#fff" stroke-width="1.200"/><rect x="11.500" y="16" width="4.500" height="8" fill="#e8d020" stroke="#101080" stroke-width="1.400"/><rect x="18.500" y="16" width="4.500" height="8" fill="#e8d020" stroke="#101080" stroke-width="1.400"/><path d="M26 16h3M26 20h3" stroke="#101080" stroke-width="1.800"/></svg>
<div class="a" style="left:2317.71px;top:371.30px;width:39.37px;height:39.45px;background:#f0f0f0"></div><svg style="left:2317.01px;top:372.10px" width="40.77" height="40.85" viewBox="0 0 41 41"><circle cx="20.500" cy="22.500" r="10.500" fill="#fff" stroke="#222" stroke-width="1.400"/><circle cx="20.500" cy="22.500" r="8" fill="#f8f8f8" stroke="#444" stroke-width="1"/><path d="M18 8h5v3h-5zM20.500 11v2M11 13l2.500 2M30 13l-2.500 2" stroke="#222" stroke-width="1.500" fill="#4040c0"/><path d="M20.500 16.500v6l4.500 4" fill="none" stroke="#222" stroke-width="1.500"/><circle cx="20.500" cy="22.500" r="6" fill="none" stroke="#555" stroke-width="1" stroke-dasharray="1 2.150"/></svg>
<div class="a" style="left:2358.48px;top:371.30px;width:39.37px;height:39.45px;background:#f0f0f0"></div><svg style="left:2357.78px;top:372.10px" width="40.77" height="40.85" viewBox="0 0 41 41"><path d="M13 9h13l-1.500 7h-13z" fill="#fff" stroke="#111" stroke-width="1.300"/><path d="M14.500 11.500h9M14 13.500h9" stroke="#111" stroke-width=".900"/><path d="M8 19c0-2 2-3 4-3h17c3 0 4 2 4 4v5c0 2-1 3-3 3H11c-2 0-3-1-3-3z" fill="#f0f0f0" stroke="#111" stroke-width="1.500"/><path d="M9 24.500h23" stroke="#111" stroke-width="1.300"/><path d="M17 26.500h4" stroke="#e02020" stroke-width="2"/><path d="M21 26.500h4" stroke="#2020e0" stroke-width="2"/><path d="M27 16.500c3 0 5 2 5.500 5" fill="none" stroke="#111" stroke-width="1.200"/></svg>
<div class="a" style="left:2195.40px;top:412.15px;width:39.37px;height:39.45px;background:#f0f0f0"></div><svg style="left:2194.70px;top:412.95px" width="40.77" height="40.85" viewBox="0 0 41 41"><rect x="4" y="5" width="13" height="10" fill="#f4f4f4" stroke="#111" stroke-width="1.200"/><rect x="6.5" y="7.2" width="8" height="5.500" fill="#909090"/><path d="M3 18.5h15l-1.500-3h-12z" fill="#ddd" stroke="#111" stroke-width="1"/><rect x="22" y="21" width="13" height="10" fill="#f4f4f4" stroke="#111" stroke-width="1.200"/><rect x="24.5" y="23.2" width="8" height="5.500" fill="#909090"/><path d="M21 34.5h15l-1.500-3h-12z" fill="#ddd" stroke="#111" stroke-width="1"/><path d="M32 16v-5.500h-7" fill="none" stroke="#1010e0" stroke-width="1.800"/><path d="M26 7v7l-4.500-3.500z" fill="#1010e0"/><path d="M9 23v6h7" fill="none" stroke="#1010e0" stroke-width="1.800"/><path d="M15 25.5l4 3.500-4 3.500z" fill="#1010e0"/></svg>
<div class="a" style="left:2236.17px;top:412.15px;width:39.37px;height:39.45px;background:#f0f0f0"></div><svg style="left:2235.47px;top:412.95px" width="40.77" height="40.85" viewBox="0 0 41 41"><rect x="4" y="5" width="13" height="10" fill="#f4f4f4" stroke="#111" stroke-width="1.200"/><rect x="6.5" y="7.2" width="8" height="5.500" fill="#1010e0"/><path d="M3 18.5h15l-1.500-3h-12z" fill="#ddd" stroke="#111" stroke-width="1"/><rect x="22" y="21" width="13" height="10" fill="#f4f4f4" stroke="#111" stroke-width="1.200"/><rect x="24.5" y="23.2" width="8" height="5.500" fill="#909090"/><path d="M21 34.5h15l-1.500-3h-12z" fill="#ddd" stroke="#111" stroke-width="1"/><path d="M9 23v6h7" fill="none" stroke="#1010e0" stroke-width="1.800"/><path d="M15 25.5l4 3.500-4 3.500z" fill="#1010e0"/></svg>
<div class="a" style="left:2276.94px;top:412.15px;width:39.37px;height:39.45px;background:#f0f0f0"></div><svg style="left:2276.24px;top:412.95px" width="40.77" height="40.85" viewBox="0 0 41 41"><rect x="4" y="5" width="13" height="10" fill="#f4f4f4" stroke="#111" stroke-width="1.200"/><rect x="6.5" y="7.2" width="8" height="5.500" fill="#909090"/><path d="M3 18.5h15l-1.500-3h-12z" fill="#ddd" stroke="#111" stroke-width="1"/><rect x="22" y="21" width="13" height="10" fill="#f4f4f4" stroke="#111" stroke-width="1.200"/><rect x="24.5" y="23.2" width="8" height="5.500" fill="#1010e0"/><path d="M21 34.5h15l-1.500-3h-12z" fill="#ddd" stroke="#111" stroke-width="1"/><path d="M9 23v6h7" fill="none" stroke="#1010e0" stroke-width="1.800"/><path d="M15 25.5l4 3.500-4 3.500z" fill="#1010e0"/></svg>
<div class="a" style="left:2317.71px;top:412.15px;width:39.37px;height:39.45px;background:#f0f0f0"></div><svg style="left:2317.01px;top:412.95px" width="40.77" height="40.85" viewBox="0 0 41 41"><path d="M9 10.500h14v3l-2.500 6h-9L9 13.500z" fill="#f4f4f4" stroke="#888" stroke-width="1.200"/><path d="M10 10h12" stroke="#30b0a0" stroke-width="1.600" stroke-dasharray="1.500 1"/><path d="M14 19.500v3c0 3 3 3.500 6 3.500h5c2 0 3 1 3 3v2" fill="none" stroke="#666" stroke-width="3"/><path d="M14.800 20v2.500c0 2.500 2.500 3 5.200 3h5c2.500 0 3.800 1.200 3.800 3.500v2" fill="none" stroke="#eee" stroke-width="1"/><path d="M24 21.500h4.500v-4" fill="none" stroke="#1010e0" stroke-width="1.700"/><path d="M26 18h5l-2.500-3.500z" fill="#1010e0"/></svg>
<div class="a" style="left:2358.48px;top:412.15px;width:39.37px;height:39.45px;background:#f0f0f0"></div><svg style="left:2357.78px;top:412.95px" width="40.77" height="40.85" viewBox="0 0 41 41"><rect x="8" y="10.500" width="24" height="22" fill="#fff" stroke="#111" stroke-width="1.800"/><path d="M8 14h24" stroke="#111" stroke-width="1.400"/><path d="M11.500 10.500v22" stroke="#111" stroke-width="1.200"/><path d="M17 14v18.500M22.500 14v18.500M27.500 14v18.500M11.500 18.500H32M11.500 23H32M11.500 27.500H32" stroke="#bbb" stroke-width="1"/><rect x="17" y="18.500" width="5.500" height="4.500" fill="#fff" stroke="#1010e0" stroke-width="1.600"/></svg>
<div class="a" style="left:2195.40px;top:453.00px;width:39.37px;height:39.45px;background:#f0f0f0"></div><svg style="left:2194.70px;top:453.80px" width="40.77" height="40.85" viewBox="0 0 41 41"><rect x="5.500" y="6.500" width="12" height="11.500" fill="#eee" stroke="#111" stroke-width="1.500"/><rect x="20.500" y="6.500" width="12" height="11.500" fill="#eee" stroke="#111" stroke-width="1.500"/><path d="M8.500 9v6.500" stroke="#1010c0" stroke-width="1.600"/><path d="M14.500 9v6.500l-5-3.200z" fill="#1010c0"/><path d="M29.500 9v6.500" stroke="#1010c0" stroke-width="1.600"/><path d="M23.500 9v6.500l5-3.200z" fill="#1010c0"/><path d="M8 18v13.500h5M8 24.500h5" fill="none" stroke="#1010c0" stroke-width="1.400"/><rect x="13" y="22.500" width="19" height="4" fill="#fff" stroke="#1010c0" stroke-width="1.400"/><rect x="13" y="29.500" width="19" height="4" fill="#fff" stroke="#1010c0" stroke-width="1.400"/></svg>
<div class="a" style="left:2236.17px;top:453.00px;width:39.37px;height:39.45px;background:#f0f0f0"></div><svg style="left:2235.47px;top:453.80px" width="40.77" height="40.85" viewBox="0 0 41 41"><path d="M8 5v11h4M8 9.500h4" fill="none" stroke="#111" stroke-width="1.300"/><rect x="12" y="5.500" width="20" height="4" fill="#fff" stroke="#111" stroke-width="1.400"/><rect x="12" y="12.500" width="20" height="4" fill="#fff" stroke="#111" stroke-width="1.400"/><path d="M11 20l-3.500 4h2.500v5.500h6v-2h-4V24h2.500z" fill="#111"/><path d="M22 22h7l3 3v8H22z" fill="#fff" stroke="#111" stroke-width="1.500"/><path d="M24.500 26.500h4M24.500 29.500h4" stroke="#111" stroke-width="1.300"/></svg>
<div class="a" style="left:2276.94px;top:453.00px;width:39.37px;height:39.45px;background:#f0f0f0"></div><svg style="left:2276.24px;top:453.80px" width="40.77" height="40.85" viewBox="0 0 41 41"><path d="M8 5v11h4M8 9.500h4" fill="none" stroke="#111" stroke-width="1.300"/><rect x="12" y="5.500" width="20" height="4" fill="#fff" stroke="#111" stroke-width="1.400"/><rect x="12" y="12.500" width="20" height="4" fill="#fff" stroke="#111" stroke-width="1.400"/><path d="M11 20l-3.500 4h2.500v5.500h6v-2h-4V24h2.500z" fill="#111"/><path d="M21 22v10a5 2.600 0 0 0 10 0v-10z" fill="#a09010" stroke="#111" stroke-width="1"/><ellipse cx="26" cy="22" rx="5" ry="2.600" fill="#f0e040" stroke="#111" stroke-width="1"/></svg>
<div class="a" style="left:2317.71px;top:453.00px;width:39.37px;height:39.45px;background:#f0f0f0"></div><svg style="left:2317.01px;top:453.80px" width="40.77" height="40.85" viewBox="0 0 41 41"><rect x="8.500" y="10.500" width="24" height="20" fill="#d4e4d0" stroke="#fff" stroke-width="1"/><path d="M8.500 31H33V10.500" fill="none" stroke="#222" stroke-width="1.600"/><path d="M9 30l11-13 4 4.500 4-7 4.500 9v6.500z" fill="#c4d8c0" stroke="#222" stroke-width="1.200"/><path d="M10 21c3-3 6-1 8-3M24 15c2-1 4-2 6-4" fill="none" stroke="#40b0a0" stroke-width="1.100"/><circle cx="12.500" cy="14.500" r="2" fill="#f0e040" stroke="#888" stroke-width=".700"/></svg>
<div class="a" style="left:2358.48px;top:453.00px;width:39.37px;height:39.45px;background:#f0f0f0"></div><svg style="left:2357.78px;top:453.80px" width="40.77" height="40.85" viewBox="0 0 41 41"><path d="M7 8v10a5 2.600 0 0 0 10 0v-10z" fill="#9a9a9a" stroke="#111" stroke-width="1"/><ellipse cx="12" cy="8" rx="5" ry="2.600" fill="#fff" stroke="#111" stroke-width="1"/><path d="M22 9v10a5 2.600 0 0 0 10 0v-10z" fill="#9a9a9a" stroke="#111" stroke-width="1"/><ellipse cx="27" cy="9" rx="5" ry="2.600" fill="#fff" stroke="#111" stroke-width="1"/><text x="20.500" y="33" font-size="11.500" text-anchor="middle" fill="#111" font-family="Liberation Serif,serif" textLength="27" lengthAdjust="spacingAndGlyphs">ODBC</text></svg>
<div class="a" style="left:2195.40px;top:493.85px;width:39.37px;height:39.45px;background:#f0f0f0"></div><svg style="left:2194.70px;top:494.65px" width="40.77" height="40.85" viewBox="0 0 41 41"><path d="M8 3.500v3h4" fill="none" stroke="#111" stroke-width="1.300"/><rect x="12" y="4.500" width="20" height="4" fill="#fff" stroke="#111" stroke-width="1.400"/><path d="M11 12l-3.500 4h2.500v5.500h6v-2h-4V16h2.500z" fill="#111"/><path d="M20 14v10a5 2.600 0 0 0 10 0v-10z" fill="#a09010" stroke="#111" stroke-width="1"/><ellipse cx="25" cy="14" rx="5" ry="2.600" fill="#f0e040" stroke="#111" stroke-width="1"/><text x="19" y="36" font-size="11.500" text-anchor="middle" fill="#111" font-family="Liberation Serif,serif" textLength="27" lengthAdjust="spacingAndGlyphs">ODBC</text></svg>
<div class="a" style="left:2189px;top:688px;width:211px;height:28px;background:#24272c"></div><div class="a" style="left:2189px;top:717px;width:211px;height:28px;background:#24272c"></div><div class="t" style="left:2254px;top:694px;font-size:17px;color:#e8e8e8">扩展组件1</div><div class="t" style="left:2254px;top:723.500px;font-size:17px;color:#e8e8e8">扩展组件2</div>
<svg style="left:2322px;top:94px" width="72" height="18" viewBox="0 0 72 18"><path d="M4 6h10l-5 5z" fill="#ddd"/><path d="M32 2h6v7h2v1.500h-4.500V16h-1v-5.500H30V9h2z" fill="none" stroke="#ddd" stroke-width="1.500"/><path d="M55 3l11 11M66 3 55 14" stroke="#ddd" stroke-width="1.800"/></svg>
<!-- output panel -->
<div class="a" style="left:103px;top:767px;width:2298px;height:218px;border:1px solid #3d4046;border-bottom:none"></div><div class="a" style="left:103px;top:983px;width:2298px;height:2px;background:#3d4046"></div><div class="t" style="left:107px;top:777px;font-size:17px;color:#e8e8e8">输出</div><div class="a" style="left:146px;top:779px;width:2174px;height:9px;background-image:radial-gradient(#373a3f 0.800px,transparent 1px);background-size:4px 4px"></div><svg style="left:2322px;top:775px" width="72" height="18" viewBox="0 0 72 18"><path d="M5 6h10l-5 5z" fill="#e4e4e4"/><path d="M32.500 2h6v7h2v1.500H36V16h-1v-5.500h-4.500V9h2z" fill="none" stroke="#e4e4e4" stroke-width="1.500"/><path d="M55 3l11 11M66 3 55 14" stroke="#e4e4e4" stroke-width="1.800"/></svg>
<div class="a" style="left:2383px;top:800px;width:17px;height:183px;background:#454147"></div><svg style="left:2386.500px;top:805px" width="10" height="6" viewBox="0 0 13 8"><path d="M0 8 6.500 1 13 8z" fill="#9c9c9c"/></svg><svg style="left:2386.500px;top:972px" width="10" height="6" viewBox="0 0 13 8"><path d="M0 0h13L6.500 7z" fill="#9c9c9c"/></svg>
<div class="t out" style="left:129px;top:806px"><span style="font-size:10.500px;vertical-align:3.500px;letter-spacing:0;margin-right:0.500px">◆</span><span class="tri">▲▲▲▲▲▲▲▲▲▲▲</span>【加载完成】<span class="tri">▲▲▲▲▲▲▲▲▲▲▲</span></div><div class="t out" style="left:126px;top:833px;word-spacing:3px">【自动保存】启动成功，30 秒自动保存1次！</div><div class="t out" style="left:126px;top:859px;word-spacing:3px">【自动备份】启动成功，10 分钟自动备份1次！</div><div class="t out" style="left:127px;top:913px">！！！检测到易语言安装在【C】盘，如果安装在C盘可能造成易语言、助手功能无法使用，请将易语言安装至其他盘中！！！</div>
<div class="a" style="left:186px;top:985px;width:75px;height:31px;background:#25282d;border:1px solid #3d4046;border-top:none"></div><div class="t" style="left:125px;top:993px;font-size:17px;color:#e8e8e8">提示</div><div class="t" style="left:206px;top:993px;font-size:17px;color:#2e9be8">输出</div><div class="t" style="left:280px;top:993px;font-size:17px;color:#e8e8e8">调用表</div><div class="t" style="left:365px;top:993px;font-size:17px;color:#e8e8e8">监视表</div><div class="t" style="left:449px;top:993px;font-size:17px;color:#e8e8e8">变量表</div><div class="t" style="left:535px;top:993px;font-size:17px;color:#e8e8e8">搜寻1</div><div class="t" style="left:615px;top:993px;font-size:17px;color:#e8e8e8">搜寻2</div><div class="t" style="left:695px;top:993px;font-size:17px;color:#e8e8e8">剪辑历史</div>
<div class="a" style="left:1535px;top:990px;width:180px;height:33px;background:#2a2e2b"></div>
<!-- taskbar -->
<div class="a" style="left:1612px;top:1024px;width:67px;height:56px;background:#2e3e4a"></div><div class="a" style="left:1612px;top:1077px;width:67px;height:3px;background:#80bff0"></div>
<div class="a" style="left:307px;top:1077px;width:56px;height:3px;background:#74b4e6"></div><div class="a" style="left:446px;top:1077px;width:56px;height:3px;background:#74b4e6"></div><div class="a" style="left:515px;top:1077px;width:56px;height:3px;background:#74b4e6"></div><div class="a" style="left:584px;top:1077px;width:56px;height:3px;background:#74b4e6"></div><div class="a" style="left:653px;top:1077px;width:56px;height:3px;background:#74b4e6"></div><div class="a" style="left:722px;top:1077px;width:56px;height:3px;background:#74b4e6"></div><div class="a" style="left:791px;top:1077px;width:56px;height:3px;background:#74b4e6"></div><div class="a" style="left:859px;top:1077px;width:56px;height:3px;background:#74b4e6"></div><div class="a" style="left:928px;top:1077px;width:56px;height:3px;background:#74b4e6"></div><div class="a" style="left:997px;top:1077px;width:56px;height:3px;background:#74b4e6"></div><div class="a" style="left:1065px;top:1077px;width:56px;height:3px;background:#74b4e6"></div><div class="a" style="left:1134px;top:1077px;width:56px;height:3px;background:#74b4e6"></div><div class="a" style="left:1204px;top:1077px;width:56px;height:3px;background:#74b4e6"></div><div class="a" style="left:1273px;top:1077px;width:56px;height:3px;background:#74b4e6"></div><div class="a" style="left:1342px;top:1077px;width:56px;height:3px;background:#74b4e6"></div><div class="a" style="left:1410px;top:1077px;width:56px;height:3px;background:#74b4e6"></div><div class="a" style="left:1478px;top:1077px;width:56px;height:3px;background:#74b4e6"></div><div class="a" style="left:1548px;top:1077px;width:56px;height:3px;background:#74b4e6"></div>
<svg style="left:109.0px;top:1032.0px" width="40" height="40" viewBox="0 0 40 40"><path d="M8 11.500 18.500 10v9.500H8zM20 9.800 32 8v11.500H20zM8 21h10.500v9.500L8 29zM20 21h12v11.500L20 30.700z" fill="#fff"/></svg>
<svg style="left:177.0px;top:1032.0px" width="40" height="40" viewBox="0 0 40 40"><circle cx="23" cy="16" r="7.500" fill="none" stroke="#fff" stroke-width="2"/><path d="M18 22 9 31.500" stroke="#fff" stroke-width="2.400"/></svg>
<svg style="left:244.0px;top:1032.0px" width="40" height="40" viewBox="0 0 40 40"><path d="M9 9.500h14M9 30.500h14M28.500 9v3M28.500 28v3" stroke="#fff" stroke-width="1.800"/><rect x="10" y="14" width="13" height="12" fill="none" stroke="#fff" stroke-width="1.800"/><rect x="27" y="16.500" width="3" height="7" fill="none" stroke="#fff" stroke-width="1.500"/></svg>
<svg style="left:315.0px;top:1032.0px" width="40" height="40" viewBox="0 0 40 40"><path d="M4 7h11l2.500 3H36v22H4z" fill="#f5b92e"/><path d="M4 12h32v20H4z" fill="#fbd765"/><path d="M9 23h22v9H9z" fill="#3f97e2"/><path d="M15 27h10v5H15z" fill="#fbd765"/></svg>
<svg style="left:384.0px;top:1032.0px" width="40" height="40" viewBox="0 0 40 40"><circle cx="20" cy="20" r="16" fill="#1c7fd8"/><path d="M5 16C8 6 22 1 32 9c5 5 4 12-1 14h-11c0-5 4-7 7-6-3-6-15-6-22-1z" fill="#35c27a"/><path d="M20 23c0 6 6 9 12 6-4 8-16 9-22 2-4-5-3-12 1-15 6-4 14-1 16 3-4-2-7 0-7 4z" fill="#0d5cb8"/></svg>
<svg style="left:454.0px;top:1032.0px" width="40" height="40" viewBox="0 0 40 40"><path d="M20 3c5 3 9 4 14 4v12c0 9-6 14-14 18C12 33 6 28 6 19V7c5 0 9-1 14-4z" fill="#2f8fe8"/><path d="M20 3c5 3 9 4 14 4v12c0 9-6 14-14 18z" fill="#4aa8f4"/><path d="M14 19.500l4.500 4.500 8-8.500" fill="none" stroke="#fff" stroke-width="2.400"/></svg>
<svg style="left:523.0px;top:1032.0px" width="40" height="40" viewBox="0 0 40 40"><rect x="3" y="3" width="34" height="34" fill="#f4eaea"/><path d="M3 3h22c-8 3-14 12-16 24L3 30z" fill="#3a2c30"/><path d="M30 3h7v22c-2-8-4-16-7-22z" fill="#4a3a3e"/><path d="M12 20c4-3 9-3 13 0M27 18c3-2 6-1 8 1" stroke="#5a4048" stroke-width="1.500" fill="none"/><path d="M3 30c6-4 12-2 16 7H3z" fill="#f2b8c8"/><path d="M22 37c2-6 8-8 15-6v6z" fill="#e8d8dc"/></svg>
<svg style="left:592.0px;top:1032.0px" width="40" height="40" viewBox="0 0 40 40"><ellipse cx="20" cy="13" rx="11" ry="9.500" fill="#c48a50"/><circle cx="10.500" cy="5.500" r="3" fill="#c48a50"/><circle cx="29.500" cy="5.500" r="3" fill="#c48a50"/><ellipse cx="20" cy="16" rx="5" ry="3.500" fill="#f4e4d0"/><circle cx="15.500" cy="11" r="1.400" fill="#222"/><circle cx="24.500" cy="11" r="1.400" fill="#222"/><ellipse cx="20" cy="14.500" rx="2" ry="1.300" fill="#222"/><path d="M12 21h16l2 12c-3 4-17 4-20 0z" fill="#d89a5c"/><path d="M15 24h10v6H15z" fill="#f4e4d0"/><path d="M12 33l-1 4h7v-3zM28 33l1 4h-7v-3z" fill="#b87840"/><path d="M30 22l6 4-5 5z" fill="#8a8a8a"/></svg>
<svg style="left:661.0px;top:1032.0px" width="40" height="40" viewBox="0 0 40 40"><g transform="translate(2.5 3) scale(.875)"><circle cx="20" cy="20" r="15" fill="#d9d08a"/><path d="M7 12 9 3l7 5zM33 12l-2-9-7 5z" fill="#7a7f88"/><ellipse cx="20" cy="19" rx="12" ry="11" fill="#8a8f98"/><ellipse cx="15.500" cy="15" rx="3" ry="4" fill="#f2f0d0"/><ellipse cx="24.500" cy="15" rx="3" ry="4" fill="#f2f0d0"/><circle cx="16" cy="16" r="1.300" fill="#111"/><circle cx="24" cy="16" r="1.300" fill="#111"/><ellipse cx="20" cy="22" rx="6.500" ry="3.500" fill="#e8e4d8"/><ellipse cx="20" cy="27" rx="4" ry="4.500" fill="#b02020"/><ellipse cx="20" cy="29" rx="2.500" ry="2" fill="#f07080"/><circle cx="20" cy="20" r="1.400" fill="#222"/></g></svg>
<svg style="left:730.0px;top:1032.0px" width="40" height="40" viewBox="0 0 40 40"><g transform="translate(2.5 3) scale(.875)"><circle cx="20" cy="20" r="15" fill="#d9d08a"/><path d="M7 12 9 3l7 5zM33 12l-2-9-7 5z" fill="#7a7f88"/><ellipse cx="20" cy="19" rx="12" ry="11" fill="#8a8f98"/><ellipse cx="15.500" cy="15" rx="3" ry="4" fill="#f2f0d0"/><ellipse cx="24.500" cy="15" rx="3" ry="4" fill="#f2f0d0"/><circle cx="16" cy="16" r="1.300" fill="#111"/><circle cx="24" cy="16" r="1.300" fill="#111"/><ellipse cx="20" cy="22" rx="6.500" ry="3.500" fill="#e8e4d8"/><ellipse cx="20" cy="27" rx="4" ry="4.500" fill="#b02020"/><ellipse cx="20" cy="29" rx="2.500" ry="2" fill="#f07080"/><circle cx="20" cy="20" r="1.400" fill="#222"/></g></svg>
<svg style="left:799.0px;top:1032.0px" width="40" height="40" viewBox="0 0 40 40"><g transform="translate(2.5 3) scale(.875)"><circle cx="20" cy="20" r="15" fill="#d9d08a"/><path d="M7 12 9 3l7 5zM33 12l-2-9-7 5z" fill="#7a7f88"/><ellipse cx="20" cy="19" rx="12" ry="11" fill="#8a8f98"/><ellipse cx="15.500" cy="15" rx="3" ry="4" fill="#f2f0d0"/><ellipse cx="24.500" cy="15" rx="3" ry="4" fill="#f2f0d0"/><circle cx="16" cy="16" r="1.300" fill="#111"/><circle cx="24" cy="16" r="1.300" fill="#111"/><ellipse cx="20" cy="22" rx="6.500" ry="3.500" fill="#e8e4d8"/><ellipse cx="20" cy="27" rx="4" ry="4.500" fill="#b02020"/><ellipse cx="20" cy="29" rx="2.500" ry="2" fill="#f07080"/><circle cx="20" cy="20" r="1.400" fill="#222"/></g></svg>
<svg style="left:1350.0px;top:1032.0px" width="40" height="40" viewBox="0 0 40 40"><g transform="translate(2.5 3) scale(.875)"><circle cx="20" cy="20" r="15" fill="#d9d08a"/><path d="M7 12 9 3l7 5zM33 12l-2-9-7 5z" fill="#7a7f88"/><ellipse cx="20" cy="19" rx="12" ry="11" fill="#8a8f98"/><ellipse cx="15.500" cy="15" rx="3" ry="4" fill="#f2f0d0"/><ellipse cx="24.500" cy="15" rx="3" ry="4" fill="#f2f0d0"/><circle cx="16" cy="16" r="1.300" fill="#111"/><circle cx="24" cy="16" r="1.300" fill="#111"/><ellipse cx="20" cy="22" rx="6.500" ry="3.500" fill="#e8e4d8"/><ellipse cx="20" cy="27" rx="4" ry="4.500" fill="#b02020"/><ellipse cx="20" cy="29" rx="2.500" ry="2" fill="#f07080"/><circle cx="20" cy="20" r="1.400" fill="#222"/></g></svg>
<svg style="left:867.0px;top:1032.0px" width="40" height="40" viewBox="0 0 40 40"><rect x="3" y="3" width="34" height="34" fill="#f0f2f0"/><ellipse cx="20" cy="20" rx="12" ry="13" fill="#dfe6e2"/><path d="M10 26c1-9 5-15 11-16 6-1 9 4 8 9-1 6-5 10-12 11z" fill="#cdd8d2"/><path d="M11 13c3-4 9-6 14-4M9 20c3-3 7-4 11-2M17 8c2 4 5 6 9 7M12 27c4 1 9 0 13-4" stroke="#8ea49c" stroke-width="1.200" fill="none"/><path d="M21 13c3 2 5 6 3 10M14 16c2 3 2 7 0 10" stroke="#a8a0c0" stroke-width="1.400" fill="none"/><path d="M24 24c2 1 4 3 5 6M8 9c2 1 4 3 5 6" stroke="#7c9cb8" stroke-width="1.200" fill="none"/><path d="M16 21c2-1 5-1 7 0" stroke="#6a7a72" stroke-width="1.300" fill="none"/><circle cx="18" cy="24" r="1.500" fill="#b8c890"/><circle cx="25" cy="15" r="1.300" fill="#90b0c8"/></svg>
<svg style="left:936.0px;top:1032.0px" width="40" height="40" viewBox="0 0 40 40"><rect x="3" y="3" width="34" height="34" fill="#f0f2f0"/><ellipse cx="20" cy="20" rx="12" ry="13" fill="#dfe6e2"/><path d="M10 26c1-9 5-15 11-16 6-1 9 4 8 9-1 6-5 10-12 11z" fill="#cdd8d2"/><path d="M11 13c3-4 9-6 14-4M9 20c3-3 7-4 11-2M17 8c2 4 5 6 9 7M12 27c4 1 9 0 13-4" stroke="#8ea49c" stroke-width="1.200" fill="none"/><path d="M21 13c3 2 5 6 3 10M14 16c2 3 2 7 0 10" stroke="#a8a0c0" stroke-width="1.400" fill="none"/><path d="M24 24c2 1 4 3 5 6M8 9c2 1 4 3 5 6" stroke="#7c9cb8" stroke-width="1.200" fill="none"/><path d="M16 21c2-1 5-1 7 0" stroke="#6a7a72" stroke-width="1.300" fill="none"/><circle cx="18" cy="24" r="1.500" fill="#b8c890"/><circle cx="25" cy="15" r="1.300" fill="#90b0c8"/></svg>
<svg style="left:1005.0px;top:1032.0px" width="40" height="40" viewBox="0 0 40 40"><rect x="3" y="3" width="34" height="34" fill="#f0f2f0"/><ellipse cx="20" cy="20" rx="12" ry="13" fill="#dfe6e2"/><path d="M10 26c1-9 5-15 11-16 6-1 9 4 8 9-1 6-5 10-12 11z" fill="#cdd8d2"/><path d="M11 13c3-4 9-6 14-4M9 20c3-3 7-4 11-2M17 8c2 4 5 6 9 7M12 27c4 1 9 0 13-4" stroke="#8ea49c" stroke-width="1.200" fill="none"/><path d="M21 13c3 2 5 6 3 10M14 16c2 3 2 7 0 10" stroke="#a8a0c0" stroke-width="1.400" fill="none"/><path d="M24 24c2 1 4 3 5 6M8 9c2 1 4 3 5 6" stroke="#7c9cb8" stroke-width="1.200" fill="none"/><path d="M16 21c2-1 5-1 7 0" stroke="#6a7a72" stroke-width="1.300" fill="none"/><circle cx="18" cy="24" r="1.500" fill="#b8c890"/><circle cx="25" cy="15" r="1.300" fill="#90b0c8"/></svg>
<svg style="left:1418.0px;top:1032.0px" width="40" height="40" viewBox="0 0 40 40"><rect x="3" y="3" width="34" height="34" fill="#f0f2f0"/><ellipse cx="20" cy="20" rx="12" ry="13" fill="#dfe6e2"/><path d="M10 26c1-9 5-15 11-16 6-1 9 4 8 9-1 6-5 10-12 11z" fill="#cdd8d2"/><path d="M11 13c3-4 9-6 14-4M9 20c3-3 7-4 11-2M17 8c2 4 5 6 9 7M12 27c4 1 9 0 13-4" stroke="#8ea49c" stroke-width="1.200" fill="none"/><path d="M21 13c3 2 5 6 3 10M14 16c2 3 2 7 0 10" stroke="#a8a0c0" stroke-width="1.400" fill="none"/><path d="M24 24c2 1 4 3 5 6M8 9c2 1 4 3 5 6" stroke="#7c9cb8" stroke-width="1.200" fill="none"/><path d="M16 21c2-1 5-1 7 0" stroke="#6a7a72" stroke-width="1.300" fill="none"/><circle cx="18" cy="24" r="1.500" fill="#b8c890"/><circle cx="25" cy="15" r="1.300" fill="#90b0c8"/></svg>
<svg style="left:1073.0px;top:1032.0px" width="40" height="40" viewBox="0 0 40 40"><rect x="4" y="6" width="32" height="28" fill="#f6f8fa" stroke="#c8d0d8" stroke-width="1"/><path d="M4 6h32v3H4z" fill="#dfe6ee"/><path d="M16 13h16M16 20h16M16 27h16" stroke="#8a98a8" stroke-width="1.800"/><path d="M8 12.500l2 2.500 3.500-4M8 19.500l2 2.500 3.500-4M8 26.500l2 2.500 3.500-4" fill="none" stroke="#2878d0" stroke-width="1.800"/></svg>
<svg style="left:1142.0px;top:1032.0px" width="40" height="40" viewBox="0 0 40 40"><rect x="4" y="6" width="32" height="28" fill="#f6f8fa" stroke="#c8d0d8" stroke-width="1"/><path d="M4 6h32v3H4z" fill="#dfe6ee"/><path d="M16 13h16M16 20h16M16 27h16" stroke="#8a98a8" stroke-width="1.800"/><path d="M8 12.500l2 2.500 3.500-4M8 19.500l2 2.500 3.500-4M8 26.500l2 2.500 3.500-4" fill="none" stroke="#2878d0" stroke-width="1.800"/></svg>
<svg style="left:1486.0px;top:1032.0px" width="40" height="40" viewBox="0 0 40 40"><rect x="4" y="6" width="32" height="28" fill="#f6f8fa" stroke="#c8d0d8" stroke-width="1"/><path d="M4 6h32v3H4z" fill="#dfe6ee"/><path d="M16 13h16M16 20h16M16 27h16" stroke="#8a98a8" stroke-width="1.800"/><path d="M8 12.500l2 2.500 3.500-4M8 19.500l2 2.500 3.500-4M8 26.500l2 2.500 3.500-4" fill="none" stroke="#2878d0" stroke-width="1.800"/></svg>
<svg style="left:1212.0px;top:1032.0px" width="40" height="40" viewBox="0 0 40 40"><path d="M20 3 35 11.500v17L20 37 5 28.500v-17z" fill="#1c6fd0"/><path d="M20 3 35 11.500 20 20 5 11.500z" fill="#3a9cf0"/><path d="M20 12l8 4.500v9L20 30l-8-4.500v-9z" fill="#0e2c50"/><path d="M20 15l5.500 3v6L20 27l-5.500-3v-6z" fill="#20c0a0"/><rect x="24" y="27" width="11" height="6" fill="#e05050"/><path d="M26 30h7" stroke="#fff" stroke-width="1.200"/></svg>
<svg style="left:1281.0px;top:1032.0px" width="40" height="40" viewBox="0 0 40 40"><path d="M20 4c5 3 9 4 14 4v11c0 9-6 14-14 17C12 33 6 28 6 19V8c5 0 9-1 14-4z" fill="none" stroke="#34acf2" stroke-width="3.800"/><path d="M13.500 19.500l5 5.500 8.500-10" fill="none" stroke="#3ab0f4" stroke-width="3.400"/></svg>
<svg style="left:1556.0px;top:1032.0px" width="40" height="40" viewBox="0 0 40 40"><rect x="3" y="4" width="34" height="10" fill="#b02a50"/><rect x="3" y="15" width="34" height="10" fill="#4242b4"/><rect x="3" y="26" width="34" height="10" fill="#209038"/><path d="M3 9h34M3 20h34M3 31h34" stroke="rgba(0,0,0,.25)" stroke-width="2"/><rect x="15" y="4" width="10" height="32" fill="#e08a18"/><path d="M20 3l5 6h-10z" fill="#f0b030"/><rect x="14" y="17" width="12" height="8" rx="1.500" fill="#fff"/><rect x="17.500" y="19" width="5" height="6" fill="#c06010"/><path d="M8 6v7M12 6v7M8 28v7" stroke="#f0d040" stroke-width="1.500"/></svg>
<svg style="left:1625.0px;top:1032.0px" width="40" height="40" viewBox="0 0 40 40"><rect x="3" y="3" width="34" height="34" fill="#f6f6f6" stroke="#c8c8c8" stroke-width="1"/><path d="M20 8c6-2 12 2 13 8M24 14c4 2 6 8 4 14M18 30c5 2 10 1 13-2" stroke="#c0c0c0" stroke-width="1.300" fill="none"/><rect x="5" y="13" width="18" height="16" rx="2" fill="#d82828"/><path d="M8 17h12M8 21h12M9 25l10-7M12 27l9-6" stroke="#fff" stroke-width="1.600"/></svg>
<svg style="left:2078.0px;top:1032.5px" width="40" height="40" viewBox="0 0 40 40"><path d="M12.500 24 20 16.500 27.500 24" fill="none" stroke="#fff" stroke-width="1.800"/></svg>
<svg style="left:2111.0px;top:1032.5px" width="40" height="40" viewBox="0 0 40 40"><path d="M11 27a4.500 4.500 0 0 1 .5-9 6.500 6.500 0 0 1 12-1.500 5.500 5.500 0 0 1 5.500 10.500z" fill="#b8b8b8"/><path d="M11 27a4.500 4.500 0 0 1 1.500-8.500l12 8.500z" fill="#ececec"/><path d="M18 27l7-8.500a5 5 0 0 1 5 8.500z" fill="#fff"/></svg>
<svg style="left:2145.0px;top:1032.5px" width="40" height="40" viewBox="0 0 40 40"><path d="M9 17h4l5-5v16l-5-5H9z" fill="none" stroke="#fff" stroke-width="1.600"/><path d="M21.500 16c2 2 2 6 0 8M24.500 13.500c3.500 3.500 3.500 9.500 0 13M27.500 11c5 5 5 13 0 18" fill="none" stroke="#fff" stroke-width="1.400"/></svg>
<svg style="left:2178.0px;top:1032.5px" width="40" height="40" viewBox="0 0 40 40"><rect x="14" y="12" width="17" height="12" fill="none" stroke="#fff" stroke-width="1.600"/><path d="M22.500 24v5M17 29.500h11" stroke="#fff" stroke-width="1.600"/><rect x="9" y="10" width="7" height="6" fill="#0a1521" stroke="#fff" stroke-width="1.500"/><path d="M12.500 16v12" stroke="#fff" stroke-width="1.500"/></svg>
<div class="t" style="left:2222px;top:1044px;font-size:19px;color:#fff">英</div><div class="a" style="left:2263px;top:1042px;width:20px;height:20px;background:#fff"></div><div class="t" style="left:2264.500px;top:1043.500px;font-size:17px;color:#05131d;font-weight:500">拼</div><div class="t" style="left:2328px;top:1031.500px;font-size:17.500px;color:#fff">16:06</div><div class="t" style="left:2308px;top:1058px;font-size:18.300px;color:#fff">2025/2/18</div><div class="a" style="left:2400px;top:1024px;width:1px;height:56px;background:#8a949c"></div>
<!-- top-right greenish patch + title icons -->
<div class="a" style="left:2004px;top:0;width:188px;height:56px;background:#2a2e2c"></div>
<svg style="left:2206px;top:8px" width="196" height="28" viewBox="0 0 196 28"><path d="M9 6.500 5 9.500l2.500 3.500 2-1v8.500h7V12l2 1L21 9.500 17 6.500c-1.500 1.500-6.500 1.500-8 0z" fill="#fff"/><g transform="translate(54 13)"><circle r="4.200" fill="none" stroke="#fff" stroke-width="2.200"/><path d="M0-8v3M0 5v3M-8 0h3M5 0h3M-5.700-5.700l2.200 2.200M3.500 3.500l2.200 2.200M-5.700 5.700l2.200-2.200M3.500-3.500l2.200-2.200" stroke="#fff" stroke-width="2"/></g><path d="M90 17.500h13" stroke="#fff" stroke-width="2.400"/><path d="M135 9.500V5h11v9h-4" fill="none" stroke="#fff" stroke-width="2"/><rect x="131" y="9.500" width="11" height="9" fill="none" stroke="#fff" stroke-width="2"/><path d="M174 7l11 11M185 7l-11 11" stroke="#fff" stroke-width="2.400"/></svg>
<!-- profile card -->
<div class="a" style="left:2000px;top:55px;width:321px;height:75px;background:#f4faf6;border-radius:7px 7px 0 0;overflow:hidden"><div class="a" style="left:4px;top:3px;width:99px;height:75px;background:#fcfdfd"></div><div class="a" style="left:252px;top:0;width:1px;height:75px;background:#dcdfdc"></div><svg style="left:4px;top:6px" width="99" height="99" viewBox="0 0 99 99"><defs><clipPath id="av1"><circle cx="49.500" cy="49.500" r="49"/></clipPath><filter id="bl1"><feGaussianBlur stdDeviation="1.200"/></filter></defs><g clip-path="url(#av1)"><rect width="99" height="99" fill="#e6e9eb"/><g filter="url(#bl1)"><path d="M2 40c6-10 14-14 20-12l-4 30-16 6z" fill="#cfd6da"/><path d="M74 26c8 0 16 6 22 16v26H80c2-14-2-28-6-42z" fill="#9aa8ae"/><path d="M82 40c4 2 8 8 8 16l-6 8z" fill="#5e6c72"/><path d="M70 52c4 0 6 6 6 12h-8z" fill="#b8c2c6"/></g><path d="M8 99c0-26 10-42 22-47l12 9h12l12-9c12 5 22 21 24 47z" fill="#34362e"/><path d="M27 56c4 7 30 7 34 0l4 7c-8 7-34 7-42 0z" fill="#d8d6cc"/><path d="M29 52c3 10 24 10 27 0l3 12c-6 6-27 6-33 0z" fill="#efece4"/><ellipse cx="42.500" cy="41" rx="15" ry="16.500" fill="#f2e2d2"/><path d="M20 48c-8-20 4-42 24-42 18 0 32 12 26 34-2-6-4-9-8-12 1 6 0 10-2 14-1-8-4-12-9-15-3 5-9 9-17 9 2-2 3-4 3-7-4 6-9 9-13 10 1 5 0 10-4 15z" fill="#e8d496"/><path d="M18 30c-4 2-8 8-6 14M66 14c6 2 12 8 12 16M30 8c-6 0-12 4-14 10M50 4c6-2 14 2 16 8" stroke="#d8c078" stroke-width="2.200" fill="none"/><path d="M28 16c6-6 16-8 24-5M24 30c2-8 8-14 16-16M56 18c4 4 6 10 5 16" stroke="#bca45c" stroke-width="1.300" fill="none"/><path d="M32 41c2.500-2 6-2 8 0M46 41c2.500-2 6-2 8 0" stroke="#4e6460" stroke-width="2.600" fill="none"/><path d="M31 38.500h10M45 38.500h10" stroke="#5a4a38" stroke-width="1"/><path d="M41 50.500h4" stroke="#b08878" stroke-width="1.100"/></g></svg><div class="t" style="left:152px;top:8px;font-size:17px;color:#8a10d8;font-weight:500">备注：暂无</div><div class="t" style="left:149px;top:32px;font-size:17.400px;color:#858585">在线：18分36秒</div><div class="a" style="left:117px;top:55px;width:56px;height:22px;background:#fff"></div><div class="a" style="left:184px;top:55px;width:56px;height:22px;background:#fff"></div><div class="a" style="left:257px;top:55px;width:54px;height:22px;background:#fff"></div><div class="t" style="left:120px;top:59px;font-size:16.500px;color:#8a8a8a">消息数</div><div class="t" style="left:187px;top:59px;font-size:16.500px;color:#8a8a8a">回复数</div><div class="t" style="left:259px;top:59px;font-size:16.500px;color:#8a8a8a">账号数</div><div class="a" style="left:283px;top:3px;width:27px;height:27px;border-radius:50%;background:#e4e6e4"></div><svg style="left:288px;top:8px" width="17" height="17" viewBox="-8.500 -8.500 17 17"><circle r="4.600" fill="#fff"/><path d="M0-7v14M-7 0h14M-5-5l10 10M-5 5 5-5" stroke="#fff" stroke-width="3"/><circle r="2" fill="#e4e6e4"/></svg></div>
<svg style="left:2126px;top:1px" width="74" height="74" viewBox="0 0 74 74"><defs><clipPath id="av2"><circle cx="37" cy="37" r="35.500"/></clipPath><radialGradient id="sun" cx="26" cy="8" r="46" gradientUnits="userSpaceOnUse"><stop offset="0" stop-color="#fffdf0"/><stop offset=".22" stop-color="#f0dea8"/><stop offset=".42" stop-color="#b09a72"/><stop offset=".62" stop-color="#5e5a58"/><stop offset="1" stop-color="#3a383a"/></radialGradient><filter id="nz" x="0" y="0" width="100%" height="100%"><feTurbulence type="fractalNoise" baseFrequency=".9" numOctaves="2" seed="4"/><feColorMatrix values="0 0 0 0 .55  0 0 0 0 .55  0 0 0 0 .55  0 0 0 1.600 -.75"/></filter><filter id="bl2"><feGaussianBlur stdDeviation="1.300"/></filter></defs><g clip-path="url(#av2)"><rect width="74" height="74" fill="url(#sun)"/><rect y="14" width="74" height="60" filter="url(#nz)" opacity=".55"/><g filter="url(#bl2)"><path d="M56 14c8 4 16 16 14 34-2 14-12 22-30 26 8-6 12-12 12-20-2-12 0-28 4-40z" fill="#14100f"/><path d="M20 74c4-10 14-16 24-16l8 16z" fill="#1a1818"/><path d="M52 58c6-3 11-5 15-12" stroke="#b8642c" stroke-width="3.500" fill="none"/><path d="M54 22c-3 8-4 18-2 28" stroke="#6a4a30" stroke-width="2" fill="none"/></g></g><circle cx="37" cy="37" r="35.500" fill="none" stroke="#5a5a5a" stroke-width="1"/></svg>
<!-- pink bot box -->
<div class="a" style="left:2197px;top:123px;width:203px;height:89px;background:#ff80c0"></div><div class="t" style="left:2245px;top:137px;font-size:19.500px;color:#fff;font-weight:700;letter-spacing:.3px">火狼网络Bot</div><div class="t" style="right:18px;top:180px;font-size:18px;color:#fff">在线时长：3天6小时11分</div>
<!-- white pill -->
<div class="a" style="left:1952px;top:124px;width:266px;height:126px;border-radius:63px;background:#fff;box-shadow:0 1px 6px rgba(0,0,0,.35)"></div><svg style="left:1978.500px;top:175px" width="24" height="24" viewBox="-12 -12 24 24"><path d="M0-11 9.500-5.500v11L0 11-9.500 5.500v-11z" fill="#2e90e0"/><path d="M-5-6v12L6 0z" fill="#fff"/><path d="M0-11v22M-9.500-5.500l19 11M9.500-5.500l-19 11" stroke="#fff" stroke-width=".800" opacity=".8"/><circle cx="0" cy="-11" r="1.500" fill="#2e90e0"/><circle cx="9.500" cy="5.500" r="1.500" fill="#2e90e0"/><circle cx="-9.500" cy="5.500" r="1.500" fill="#2e90e0"/></svg><div class="t" style="left:2004px;top:179px;font-size:9.500px;color:#222;font-weight:900;letter-spacing:.2px">火狼网络</div><div class="t" style="left:2004px;top:191px;font-size:4.300px;color:#444;font-weight:700">Huo Lang Wang Luo</div><div class="t" style="left:2076px;top:140px;font-size:19.500px;color:#e81818;font-weight:700">火狼网络小</div><div class="t" style="left:2076px;top:169px;font-size:17.500px;color:#2e90ea">收：3条</div><div class="t" style="left:2076px;top:195.500px;font-size:17.500px;color:#a030e0">发：3条</div><div class="t" style="left:2076px;top:222.500px;font-size:17.500px;color:#1c9a34">0天19时25分</div><div class="a" style="left:2015.500px;top:197.500px;width:54px;height:54px;border-radius:50%;background:#fff;border:2.200px solid #80bcf4;box-shadow:0 0 7px 2.500px rgba(140,195,245,.55)"></div><svg style="left:2018px;top:208px" width="48" height="32" viewBox="0 0 48 32"><defs><linearGradient id="exg" x1="0" y1="0" x2="0" y2="1"><stop offset="0" stop-color="#f05c84"/><stop offset="1" stop-color="#e894dc"/></linearGradient></defs><text x="3" y="27.800" font-size="30.700" font-weight="700" fill="url(#exg)" font-family="Liberation Sans,sans-serif" textLength="42" lengthAdjust="spacingAndGlyphs">EX</text></svg>
<!-- floating control pill -->
<div class="a" style="left:96px;top:12px;width:400px;height:106px;border-radius:42px;background:rgba(236,236,236,.93)"></div><svg style="left:130px;top:28px" width="80" height="80" viewBox="0 0 80 80"><circle cx="33.500" cy="32.500" r="26.500" fill="none" stroke="#2a2a2a" stroke-width="4.500"/><path d="M52 51.500 67 66" stroke="#2a2a2a" stroke-width="6"/><path d="M33.500 19v27M20 32.500h27" stroke="#2a2a2a" stroke-width="5.500"/></svg><svg style="left:251px;top:26px" width="76" height="76" viewBox="0 0 76 76"><circle cx="38" cy="38.500" r="37.500" fill="#2a2a2a"/><path d="M52 18.500 39 30.500 52 42.500" fill="none" stroke="#e4e4e4" stroke-width="6.500" stroke-linecap="round" stroke-linejoin="round"/><path d="M23 36 36 48 23 60" fill="none" stroke="#e4e4e4" stroke-width="6.500" stroke-linecap="round" stroke-linejoin="round"/></svg><svg style="left:372px;top:36px" width="82" height="58" viewBox="0 0 82 58"><rect x="2.200" y="2.200" width="77" height="52" fill="none" stroke="#2a2a2a" stroke-width="4.200"/><rect x="10.5" y="11.5" width="7.500" height="7.500" fill="#2a2a2a"/><rect x="24.1" y="11.5" width="7.500" height="7.500" fill="#2a2a2a"/><rect x="37.7" y="11.5" width="7.500" height="7.500" fill="#2a2a2a"/><rect x="51.3" y="11.5" width="7.500" height="7.500" fill="#2a2a2a"/><rect x="64.9" y="11.5" width="7.500" height="7.500" fill="#2a2a2a"/><rect x="10.5" y="25.5" width="7.500" height="7.500" fill="#2a2a2a"/><rect x="24.1" y="25.5" width="7.500" height="7.500" fill="#2a2a2a"/><rect x="37.7" y="25.5" width="7.500" height="7.500" fill="#2a2a2a"/><rect x="51.3" y="25.5" width="7.500" height="7.500" fill="#2a2a2a"/><rect x="64.9" y="25.5" width="7.500" height="7.500" fill="#2a2a2a"/><rect x="24" y="38.500" width="34" height="7" fill="#2a2a2a"/></svg>

</body></html>
